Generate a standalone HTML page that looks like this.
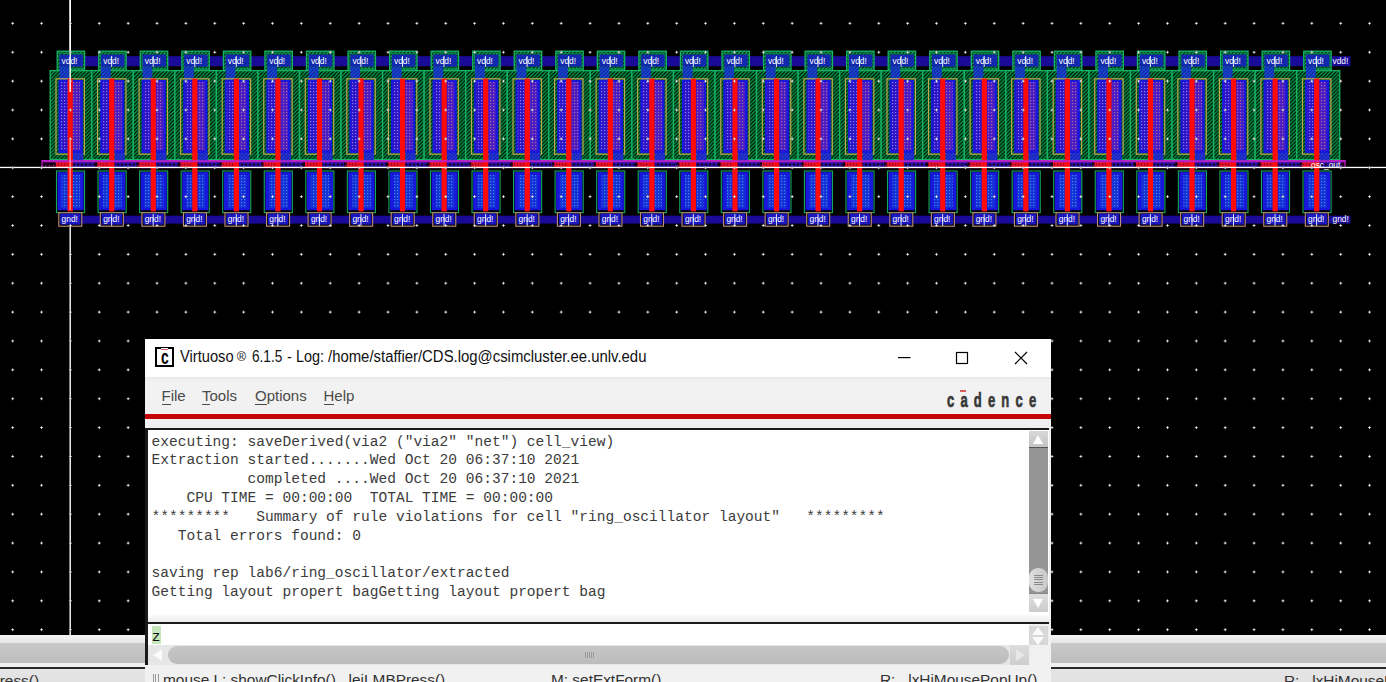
<!DOCTYPE html><html><head><meta charset='utf-8'><title>Virtuoso</title><style>
html,body{margin:0;padding:0;background:#f0f0f0;}
body{width:1386px;height:682px;overflow:hidden;position:relative;font-family:"Liberation Sans",sans-serif;}
#cv{position:absolute;left:0;top:0;display:block;}
.abs{position:absolute;}
#mainbot{left:0;top:635px;width:1386px;height:47px;background:linear-gradient(#ececec,#e2e2e2);}
#mainbot .s1{position:absolute;left:0;top:0;width:100%;height:8px;background:linear-gradient(#f4f4f4,#e6e6e6);}
#mainbot .s2{position:absolute;left:0;top:8px;width:100%;height:19.6px;background:linear-gradient(#cacaca,#c2c2c2 50%,#bebebe);}
#mainbot .s3{position:absolute;left:0;top:27.6px;width:100%;height:4.4px;background:#f0f0f0;}
#mainbot .s4{position:absolute;left:0;top:32px;width:100%;height:2px;background:#2a2a2a;}
#mainbot .t{position:absolute;top:37px;font-size:15.4px;color:#333;white-space:nowrap;line-height:18px;}
#win{left:145px;top:339px;width:906px;height:343px;background:#f0f0f0;overflow:hidden;}
#title{position:absolute;left:0;top:0;width:906px;height:38px;background:#fff;}
#title .tt{position:absolute;top:7.9px;font-size:15.8px;line-height:20px;color:#111;white-space:nowrap;transform-origin:0 0;}
#icon{position:absolute;left:10.2px;top:8.2px;width:15.2px;height:15.5px;border:2px solid #000;background:#fff;}
#icon b{position:absolute;left:3.6px;top:-3.3px;font-size:21px;line-height:22px;font-weight:bold;color:#000;transform-origin:0 0;transform:scaleX(.66);}
#icon i{position:absolute;left:4.2px;top:-0.4px;width:7px;height:1.6px;background:#d06070;box-shadow:0 -1px 0 #fff,0 1px 0 #fff,-1px 0 0 #fff,1px 0 0 #fff;}
#menubar{position:absolute;left:0;top:38px;width:906px;height:37px;background:linear-gradient(#e9e9e9,#f2f2f2 12%,#f1f1f1);}
#menubar span{position:absolute;top:9.5px;font-size:15px;line-height:18px;color:#4a4a4a;}
#menubar span u{text-decoration:none;border-bottom:1.4px solid #4a4a4a;}
#redline{position:absolute;left:0;top:75.3px;width:906px;height:5.2px;background:#c40404;}
#logo{position:absolute;left:801.8px;top:46.5px;font-family:"Liberation Sans",sans-serif;font-weight:bold;font-size:21px;line-height:28px;letter-spacing:9.95px;color:#383838;-webkit-text-stroke:0.7px #383838;white-space:nowrap;transform-origin:0 0;transform:scaleX(0.62);}
#logobar{position:absolute;left:815.2px;top:50.6px;width:6.2px;height:2px;background:#d86060;}
#ta{position:absolute;left:0;top:88.5px;width:904px;height:187px;background:#fff;border-left:2.5px solid #1a1a1a;border-top:2px solid #1a1a1a;box-sizing:border-box;}
#ta pre{margin:0;position:absolute;left:4.5px;top:3px;font-family:"Liberation Mono",monospace;font-size:14.55px;line-height:18.85px;color:#3c3c3c;white-space:pre;}
#vsb{position:absolute;left:883.5px;top:92px;width:19.5px;height:180.5px;background:#959595;}
#vsb .up{position:absolute;left:0;top:0;width:100%;height:17px;background:linear-gradient(#d8d8d8,#c4c4c4);border-bottom:1.5px solid #555;box-sizing:border-box;}
#vsb .dn{position:absolute;left:0;bottom:0;width:100%;height:19px;background:linear-gradient(#dedede,#cccccc);border-top:1px solid #888;box-sizing:border-box;}
#vsb .th{position:absolute;left:0;top:137px;width:100%;height:24px;border-radius:9px;background:linear-gradient(90deg,#e0e0e0,#c8c8c8);}
#vsb .th i{position:absolute;left:5.5px;top:7px;width:8.5px;height:10px;background:repeating-linear-gradient(#8a8a8a 0 1px,transparent 1px 2.2px);}
.tri-up{position:absolute;left:4px;top:4px;width:0;height:0;border-left:5.7px solid transparent;border-right:5.7px solid transparent;border-bottom:9px solid #fff;}
.tri-dn{position:absolute;left:4px;top:5px;width:0;height:0;border-left:5.7px solid transparent;border-right:5.7px solid transparent;border-top:9px solid #fff;}
#gap{position:absolute;left:0;top:276px;width:906px;height:7px;background:linear-gradient(#fafafa,#ebebeb);}
#inp{position:absolute;left:0;top:283px;width:884px;height:43px;background:#fff;border-left:2.5px solid #1a1a1a;border-top:2.2px solid #1a1a1a;box-sizing:border-box;}
#inp .z{position:absolute;left:4.6px;top:1.6px;width:9px;height:18.5px;background:#c6e6bc;}
#inp .z span{position:absolute;left:0.2px;top:2.5px;font-family:"Liberation Mono",monospace;font-size:14.55px;line-height:18px;color:#111;}
#inpline{position:absolute;left:0;top:283px;width:904px;height:2.2px;background:#1a1a1a;}
#lb{position:absolute;left:0;top:88.5px;width:2.5px;height:237.5px;background:#1a1a1a;}
#hsb{position:absolute;left:2.5px;top:306px;width:881px;height:20px;background:#e6e6e6;}
#hsb .th{position:absolute;left:20px;top:1px;width:841px;height:18px;border-radius:9px;background:linear-gradient(#c6c6c6,#bcbcbc);}
#hsb .grip{position:absolute;left:437px;top:7px;width:9px;height:6px;background:repeating-linear-gradient(90deg,#999 0 1px,transparent 1px 2px);}
#hsb .l{position:absolute;left:5px;top:4px;width:0;height:0;border-top:6px solid transparent;border-bottom:6px solid transparent;border-right:9px solid #fbfbfb;}
#hsb .r{position:absolute;left:862px;top:0;width:19px;height:20px;background:linear-gradient(#dcdcdc,#cecece);}
#hsb .r i{position:absolute;left:6px;top:4px;width:0;height:0;border-top:6px solid transparent;border-bottom:6px solid transparent;border-left:9px solid #e8e8e8;}
#spin{position:absolute;left:884px;top:287px;width:19px;height:19px;background:#d8d8d8;}
#spin .a{position:absolute;left:3px;top:1px;width:0;height:0;border-left:6.5px solid transparent;border-right:6.5px solid transparent;border-bottom:8px solid #fafafa;}
#spin .b{position:absolute;left:3px;top:10.5px;width:0;height:0;border-left:6.5px solid transparent;border-right:6.5px solid transparent;border-top:8px solid #fafafa;}
#status{position:absolute;left:0;top:326px;width:906px;height:17px;background:#f1f1f1;}
#status span{position:absolute;top:6.3px;font-size:15.4px;line-height:18px;color:#333;white-space:nowrap;}
#status .g{position:absolute;left:8px;top:9px;width:7px;height:9px;background:repeating-linear-gradient(90deg,#999 0 1px,transparent 1px 2.3px);}
.wb{position:absolute;}
</style></head><body><svg id='cv' width='1386' height='635' viewBox='0 0 1386 635'>
<defs>
<pattern id='hatch' width='3.7' height='3.7' patternUnits='userSpaceOnUse'>
 <rect width='3.7' height='3.7' fill='#000c04'/>
 <path d='M-1 4.7L4.7 -1M-1 1L1 -1M2.7 4.7L4.7 2.7' stroke='#06a44e' stroke-width='1.3'/>
</pattern>
<pattern id='bluehatch' width='3.7' height='3.7' patternUnits='userSpaceOnUse'>
 <rect width='3.7' height='3.7' fill='#1020b8'/>
 <path d='M-1 4.7L4.7 -1M-1 1L1 -1M2.7 4.7L4.7 2.7' stroke='#1a60c0' stroke-width='1.1'/>
</pattern>
<pattern id='taphatch' width='3.7' height='3.7' patternUnits='userSpaceOnUse'>
 <rect width='3.7' height='3.7' fill='#1418c0'/>
 <path d='M-1 4.7L4.7 -1M-1 1L1 -1M2.7 4.7L4.7 2.7' stroke='#103a9c' stroke-width='1.2'/>
</pattern>
<pattern id='bluehatch2' width='3.7' height='3.7' patternUnits='userSpaceOnUse'>
 <rect width='3.7' height='3.7' fill='#1818c8'/>
 <path d='M-1 4.7L4.7 -1M-1 1L1 -1M2.7 4.7L4.7 2.7' stroke='#2a50c0' stroke-width='1'/>
</pattern>
<pattern id='pdots' width='3' height='3' patternUnits='userSpaceOnUse'>
 <rect width='3' height='3' fill='#4a1cc4'/>
 <rect x='1' y='1' width='1.2' height='1.2' fill='#a868a8'/>
</pattern>
<pattern id='pdotsL' width='3' height='3' patternUnits='userSpaceOnUse'>
 <rect width='3' height='3' fill='#2c14c8'/>
 <rect x='1' y='1' width='1.2' height='1.2' fill='#8c7ce8'/>
</pattern>
<pattern id='ndots' width='3' height='3' patternUnits='userSpaceOnUse'>
 <rect width='3' height='3' fill='#1630d8'/>
 <rect x='1' y='1' width='1.2' height='1.2' fill='#3a8ae0'/>
</pattern>
<pattern id='banddots' width='4' height='5' patternUnits='userSpaceOnUse' patternTransform='translate(0 162)'>
 <rect width='4' height='5' fill='#2a10a0'/>
 <circle cx='2' cy='2.7' r='1.15' fill='#100828'/>
</pattern>
<pattern id='bandred' width='3' height='5' patternUnits='userSpaceOnUse' patternTransform='translate(0 162)'>
 <rect width='3' height='5' fill='#e8102c'/>
 <rect x='1' y='1.5' width='1.2' height='2' fill='#900818'/>
</pattern>
<pattern id='m2' width='4' height='4' patternUnits='userSpaceOnUse'>
 <rect width='4' height='4' fill='#180018'/>
 <rect x='1' y='1' width='1' height='1' fill='#a020a0'/>
</pattern>
</defs>
<rect width='1386' height='635' fill='#000'/><rect x='69.5' y='0' width='1.4' height='635' fill='#fff'/><rect x='59.00' y='56.20' width='1291.50' height='10.00' fill='#1a0a98'/><rect x='59.00' y='215.70' width='1291.50' height='7.90' fill='#1a0a98'/><rect x='42.00' y='160.60' width='1303.00' height='6.90' fill='url(#m2)' stroke='#c814c8' stroke-width='1.2'/><rect x='50.20' y='70.60' width='41.55' height='89.00' fill='url(#hatch)' stroke='#14b464' stroke-width='1.3'/><rect x='57.20' y='51.20' width='27.40' height='19.00' fill='url(#hatch)' stroke='#14b464' stroke-width='1.3'/><rect x='59.20' y='53.20' width='23.40' height='15.40' fill='none' stroke='#10a868' stroke-width='1' stroke-dasharray='2 1.5'/><rect x='59.50' y='54.60' width='23.40' height='12.00' fill='url(#taphatch)'/><rect x='59.50' y='66.60' width='9.70' height='15.40' fill='url(#bluehatch)'/><rect x='58.60' y='80.00' width='24.20' height='73.00' fill='#1818dc'/><rect x='60.50' y='82.00' width='7.20' height='68.50' fill='url(#pdotsL)'/><rect x='73.00' y='82.00' width='7.20' height='68.50' fill='url(#pdots)'/><rect x='56.00' y='78.80' width='28.40' height='75.40' fill='none' stroke='#c0a850' stroke-width='1.2'/><rect x='73.00' y='153.00' width='10.20' height='9.00' fill='url(#bluehatch2)'/><rect x='55.70' y='162.00' width='12.50' height='5.00' fill='url(#bandred)'/><rect x='72.70' y='162.00' width='22.10' height='5.00' fill='url(#banddots)'/><rect x='56.50' y='171.00' width='28.10' height='41.60' fill='#000' stroke='#14a85c' stroke-width='1.1'/><rect x='57.60' y='172.10' width='26.10' height='38.10' fill='#1818dc'/><rect x='61.50' y='175.00' width='6.20' height='33.00' fill='url(#ndots)'/><rect x='73.00' y='175.00' width='7.20' height='33.00' fill='url(#ndots)'/><rect x='58.80' y='212.80' width='23.00' height='13.40' fill='#000' stroke='#c09078' stroke-width='1.1'/><rect x='60.20' y='213.60' width='20.40' height='11.00' fill='#1a16c0'/><rect x='67.60' y='78.60' width='5.20' height='132.80' fill='#ff0a0a'/><rect x='91.75' y='70.60' width='41.55' height='89.00' fill='url(#hatch)' stroke='#14b464' stroke-width='1.3'/><rect x='98.75' y='51.20' width='27.40' height='19.00' fill='url(#hatch)' stroke='#14b464' stroke-width='1.3'/><rect x='100.75' y='53.20' width='23.40' height='15.40' fill='none' stroke='#10a868' stroke-width='1' stroke-dasharray='2 1.5'/><rect x='101.05' y='54.60' width='23.40' height='12.00' fill='url(#taphatch)'/><rect x='101.05' y='66.60' width='9.70' height='15.40' fill='url(#bluehatch)'/><rect x='100.15' y='80.00' width='24.20' height='73.00' fill='#1818dc'/><rect x='102.05' y='82.00' width='7.20' height='68.50' fill='url(#pdotsL)'/><rect x='114.55' y='82.00' width='7.20' height='68.50' fill='url(#pdots)'/><rect x='97.55' y='78.80' width='28.40' height='75.40' fill='none' stroke='#c0a850' stroke-width='1.2'/><rect x='114.55' y='153.00' width='10.20' height='9.00' fill='url(#bluehatch2)'/><rect x='97.25' y='162.00' width='12.50' height='5.00' fill='url(#bandred)'/><rect x='114.25' y='162.00' width='22.10' height='5.00' fill='url(#banddots)'/><rect x='98.05' y='171.00' width='28.10' height='41.60' fill='#000' stroke='#14a85c' stroke-width='1.1'/><rect x='99.15' y='172.10' width='26.10' height='38.10' fill='#1818dc'/><rect x='103.05' y='175.00' width='6.20' height='33.00' fill='url(#ndots)'/><rect x='114.55' y='175.00' width='7.20' height='33.00' fill='url(#ndots)'/><rect x='100.35' y='212.80' width='23.00' height='13.40' fill='#000' stroke='#c09078' stroke-width='1.1'/><rect x='101.75' y='213.60' width='20.40' height='11.00' fill='#1a16c0'/><rect x='109.15' y='78.60' width='5.20' height='132.80' fill='#ff0a0a'/><rect x='133.30' y='70.60' width='41.55' height='89.00' fill='url(#hatch)' stroke='#14b464' stroke-width='1.3'/><rect x='140.30' y='51.20' width='27.40' height='19.00' fill='url(#hatch)' stroke='#14b464' stroke-width='1.3'/><rect x='142.30' y='53.20' width='23.40' height='15.40' fill='none' stroke='#10a868' stroke-width='1' stroke-dasharray='2 1.5'/><rect x='142.60' y='54.60' width='23.40' height='12.00' fill='url(#taphatch)'/><rect x='142.60' y='66.60' width='9.70' height='15.40' fill='url(#bluehatch)'/><rect x='141.70' y='80.00' width='24.20' height='73.00' fill='#1818dc'/><rect x='143.60' y='82.00' width='7.20' height='68.50' fill='url(#pdotsL)'/><rect x='156.10' y='82.00' width='7.20' height='68.50' fill='url(#pdots)'/><rect x='139.10' y='78.80' width='28.40' height='75.40' fill='none' stroke='#c0a850' stroke-width='1.2'/><rect x='156.10' y='153.00' width='10.20' height='9.00' fill='url(#bluehatch2)'/><rect x='138.80' y='162.00' width='12.50' height='5.00' fill='url(#bandred)'/><rect x='155.80' y='162.00' width='22.10' height='5.00' fill='url(#banddots)'/><rect x='139.60' y='171.00' width='28.10' height='41.60' fill='#000' stroke='#14a85c' stroke-width='1.1'/><rect x='140.70' y='172.10' width='26.10' height='38.10' fill='#1818dc'/><rect x='144.60' y='175.00' width='6.20' height='33.00' fill='url(#ndots)'/><rect x='156.10' y='175.00' width='7.20' height='33.00' fill='url(#ndots)'/><rect x='141.90' y='212.80' width='23.00' height='13.40' fill='#000' stroke='#c09078' stroke-width='1.1'/><rect x='143.30' y='213.60' width='20.40' height='11.00' fill='#1a16c0'/><rect x='150.70' y='78.60' width='5.20' height='132.80' fill='#ff0a0a'/><rect x='174.85' y='70.60' width='41.55' height='89.00' fill='url(#hatch)' stroke='#14b464' stroke-width='1.3'/><rect x='181.85' y='51.20' width='27.40' height='19.00' fill='url(#hatch)' stroke='#14b464' stroke-width='1.3'/><rect x='183.85' y='53.20' width='23.40' height='15.40' fill='none' stroke='#10a868' stroke-width='1' stroke-dasharray='2 1.5'/><rect x='184.15' y='54.60' width='23.40' height='12.00' fill='url(#taphatch)'/><rect x='184.15' y='66.60' width='9.70' height='15.40' fill='url(#bluehatch)'/><rect x='183.25' y='80.00' width='24.20' height='73.00' fill='#1818dc'/><rect x='185.15' y='82.00' width='7.20' height='68.50' fill='url(#pdotsL)'/><rect x='197.65' y='82.00' width='7.20' height='68.50' fill='url(#pdots)'/><rect x='180.65' y='78.80' width='28.40' height='75.40' fill='none' stroke='#c0a850' stroke-width='1.2'/><rect x='197.65' y='153.00' width='10.20' height='9.00' fill='url(#bluehatch2)'/><rect x='180.35' y='162.00' width='12.50' height='5.00' fill='url(#bandred)'/><rect x='197.35' y='162.00' width='22.10' height='5.00' fill='url(#banddots)'/><rect x='181.15' y='171.00' width='28.10' height='41.60' fill='#000' stroke='#14a85c' stroke-width='1.1'/><rect x='182.25' y='172.10' width='26.10' height='38.10' fill='#1818dc'/><rect x='186.15' y='175.00' width='6.20' height='33.00' fill='url(#ndots)'/><rect x='197.65' y='175.00' width='7.20' height='33.00' fill='url(#ndots)'/><rect x='183.45' y='212.80' width='23.00' height='13.40' fill='#000' stroke='#c09078' stroke-width='1.1'/><rect x='184.85' y='213.60' width='20.40' height='11.00' fill='#1a16c0'/><rect x='192.25' y='78.60' width='5.20' height='132.80' fill='#ff0a0a'/><rect x='216.40' y='70.60' width='41.55' height='89.00' fill='url(#hatch)' stroke='#14b464' stroke-width='1.3'/><rect x='223.40' y='51.20' width='27.40' height='19.00' fill='url(#hatch)' stroke='#14b464' stroke-width='1.3'/><rect x='225.40' y='53.20' width='23.40' height='15.40' fill='none' stroke='#10a868' stroke-width='1' stroke-dasharray='2 1.5'/><rect x='225.70' y='54.60' width='23.40' height='12.00' fill='url(#taphatch)'/><rect x='225.70' y='66.60' width='9.70' height='15.40' fill='url(#bluehatch)'/><rect x='224.80' y='80.00' width='24.20' height='73.00' fill='#1818dc'/><rect x='226.70' y='82.00' width='7.20' height='68.50' fill='url(#pdotsL)'/><rect x='239.20' y='82.00' width='7.20' height='68.50' fill='url(#pdots)'/><rect x='222.20' y='78.80' width='28.40' height='75.40' fill='none' stroke='#c0a850' stroke-width='1.2'/><rect x='239.20' y='153.00' width='10.20' height='9.00' fill='url(#bluehatch2)'/><rect x='221.90' y='162.00' width='12.50' height='5.00' fill='url(#bandred)'/><rect x='238.90' y='162.00' width='22.10' height='5.00' fill='url(#banddots)'/><rect x='222.70' y='171.00' width='28.10' height='41.60' fill='#000' stroke='#14a85c' stroke-width='1.1'/><rect x='223.80' y='172.10' width='26.10' height='38.10' fill='#1818dc'/><rect x='227.70' y='175.00' width='6.20' height='33.00' fill='url(#ndots)'/><rect x='239.20' y='175.00' width='7.20' height='33.00' fill='url(#ndots)'/><rect x='225.00' y='212.80' width='23.00' height='13.40' fill='#000' stroke='#c09078' stroke-width='1.1'/><rect x='226.40' y='213.60' width='20.40' height='11.00' fill='#1a16c0'/><rect x='233.80' y='78.60' width='5.20' height='132.80' fill='#ff0a0a'/><rect x='257.95' y='70.60' width='41.55' height='89.00' fill='url(#hatch)' stroke='#14b464' stroke-width='1.3'/><rect x='264.95' y='51.20' width='27.40' height='19.00' fill='url(#hatch)' stroke='#14b464' stroke-width='1.3'/><rect x='266.95' y='53.20' width='23.40' height='15.40' fill='none' stroke='#10a868' stroke-width='1' stroke-dasharray='2 1.5'/><rect x='267.25' y='54.60' width='23.40' height='12.00' fill='url(#taphatch)'/><rect x='267.25' y='66.60' width='9.70' height='15.40' fill='url(#bluehatch)'/><rect x='266.35' y='80.00' width='24.20' height='73.00' fill='#1818dc'/><rect x='268.25' y='82.00' width='7.20' height='68.50' fill='url(#pdotsL)'/><rect x='280.75' y='82.00' width='7.20' height='68.50' fill='url(#pdots)'/><rect x='263.75' y='78.80' width='28.40' height='75.40' fill='none' stroke='#c0a850' stroke-width='1.2'/><rect x='280.75' y='153.00' width='10.20' height='9.00' fill='url(#bluehatch2)'/><rect x='263.45' y='162.00' width='12.50' height='5.00' fill='url(#bandred)'/><rect x='280.45' y='162.00' width='22.10' height='5.00' fill='url(#banddots)'/><rect x='264.25' y='171.00' width='28.10' height='41.60' fill='#000' stroke='#14a85c' stroke-width='1.1'/><rect x='265.35' y='172.10' width='26.10' height='38.10' fill='#1818dc'/><rect x='269.25' y='175.00' width='6.20' height='33.00' fill='url(#ndots)'/><rect x='280.75' y='175.00' width='7.20' height='33.00' fill='url(#ndots)'/><rect x='266.55' y='212.80' width='23.00' height='13.40' fill='#000' stroke='#c09078' stroke-width='1.1'/><rect x='267.95' y='213.60' width='20.40' height='11.00' fill='#1a16c0'/><rect x='275.35' y='78.60' width='5.20' height='132.80' fill='#ff0a0a'/><rect x='299.50' y='70.60' width='41.55' height='89.00' fill='url(#hatch)' stroke='#14b464' stroke-width='1.3'/><rect x='306.50' y='51.20' width='27.40' height='19.00' fill='url(#hatch)' stroke='#14b464' stroke-width='1.3'/><rect x='308.50' y='53.20' width='23.40' height='15.40' fill='none' stroke='#10a868' stroke-width='1' stroke-dasharray='2 1.5'/><rect x='308.80' y='54.60' width='23.40' height='12.00' fill='url(#taphatch)'/><rect x='308.80' y='66.60' width='9.70' height='15.40' fill='url(#bluehatch)'/><rect x='307.90' y='80.00' width='24.20' height='73.00' fill='#1818dc'/><rect x='309.80' y='82.00' width='7.20' height='68.50' fill='url(#pdotsL)'/><rect x='322.30' y='82.00' width='7.20' height='68.50' fill='url(#pdots)'/><rect x='305.30' y='78.80' width='28.40' height='75.40' fill='none' stroke='#c0a850' stroke-width='1.2'/><rect x='322.30' y='153.00' width='10.20' height='9.00' fill='url(#bluehatch2)'/><rect x='305.00' y='162.00' width='12.50' height='5.00' fill='url(#bandred)'/><rect x='322.00' y='162.00' width='22.10' height='5.00' fill='url(#banddots)'/><rect x='305.80' y='171.00' width='28.10' height='41.60' fill='#000' stroke='#14a85c' stroke-width='1.1'/><rect x='306.90' y='172.10' width='26.10' height='38.10' fill='#1818dc'/><rect x='310.80' y='175.00' width='6.20' height='33.00' fill='url(#ndots)'/><rect x='322.30' y='175.00' width='7.20' height='33.00' fill='url(#ndots)'/><rect x='308.10' y='212.80' width='23.00' height='13.40' fill='#000' stroke='#c09078' stroke-width='1.1'/><rect x='309.50' y='213.60' width='20.40' height='11.00' fill='#1a16c0'/><rect x='316.90' y='78.60' width='5.20' height='132.80' fill='#ff0a0a'/><rect x='341.05' y='70.60' width='41.55' height='89.00' fill='url(#hatch)' stroke='#14b464' stroke-width='1.3'/><rect x='348.05' y='51.20' width='27.40' height='19.00' fill='url(#hatch)' stroke='#14b464' stroke-width='1.3'/><rect x='350.05' y='53.20' width='23.40' height='15.40' fill='none' stroke='#10a868' stroke-width='1' stroke-dasharray='2 1.5'/><rect x='350.35' y='54.60' width='23.40' height='12.00' fill='url(#taphatch)'/><rect x='350.35' y='66.60' width='9.70' height='15.40' fill='url(#bluehatch)'/><rect x='349.45' y='80.00' width='24.20' height='73.00' fill='#1818dc'/><rect x='351.35' y='82.00' width='7.20' height='68.50' fill='url(#pdotsL)'/><rect x='363.85' y='82.00' width='7.20' height='68.50' fill='url(#pdots)'/><rect x='346.85' y='78.80' width='28.40' height='75.40' fill='none' stroke='#c0a850' stroke-width='1.2'/><rect x='363.85' y='153.00' width='10.20' height='9.00' fill='url(#bluehatch2)'/><rect x='346.55' y='162.00' width='12.50' height='5.00' fill='url(#bandred)'/><rect x='363.55' y='162.00' width='22.10' height='5.00' fill='url(#banddots)'/><rect x='347.35' y='171.00' width='28.10' height='41.60' fill='#000' stroke='#14a85c' stroke-width='1.1'/><rect x='348.45' y='172.10' width='26.10' height='38.10' fill='#1818dc'/><rect x='352.35' y='175.00' width='6.20' height='33.00' fill='url(#ndots)'/><rect x='363.85' y='175.00' width='7.20' height='33.00' fill='url(#ndots)'/><rect x='349.65' y='212.80' width='23.00' height='13.40' fill='#000' stroke='#c09078' stroke-width='1.1'/><rect x='351.05' y='213.60' width='20.40' height='11.00' fill='#1a16c0'/><rect x='358.45' y='78.60' width='5.20' height='132.80' fill='#ff0a0a'/><rect x='382.60' y='70.60' width='41.55' height='89.00' fill='url(#hatch)' stroke='#14b464' stroke-width='1.3'/><rect x='389.60' y='51.20' width='27.40' height='19.00' fill='url(#hatch)' stroke='#14b464' stroke-width='1.3'/><rect x='391.60' y='53.20' width='23.40' height='15.40' fill='none' stroke='#10a868' stroke-width='1' stroke-dasharray='2 1.5'/><rect x='391.90' y='54.60' width='23.40' height='12.00' fill='url(#taphatch)'/><rect x='391.90' y='66.60' width='9.70' height='15.40' fill='url(#bluehatch)'/><rect x='391.00' y='80.00' width='24.20' height='73.00' fill='#1818dc'/><rect x='392.90' y='82.00' width='7.20' height='68.50' fill='url(#pdotsL)'/><rect x='405.40' y='82.00' width='7.20' height='68.50' fill='url(#pdots)'/><rect x='388.40' y='78.80' width='28.40' height='75.40' fill='none' stroke='#c0a850' stroke-width='1.2'/><rect x='405.40' y='153.00' width='10.20' height='9.00' fill='url(#bluehatch2)'/><rect x='388.10' y='162.00' width='12.50' height='5.00' fill='url(#bandred)'/><rect x='405.10' y='162.00' width='22.10' height='5.00' fill='url(#banddots)'/><rect x='388.90' y='171.00' width='28.10' height='41.60' fill='#000' stroke='#14a85c' stroke-width='1.1'/><rect x='390.00' y='172.10' width='26.10' height='38.10' fill='#1818dc'/><rect x='393.90' y='175.00' width='6.20' height='33.00' fill='url(#ndots)'/><rect x='405.40' y='175.00' width='7.20' height='33.00' fill='url(#ndots)'/><rect x='391.20' y='212.80' width='23.00' height='13.40' fill='#000' stroke='#c09078' stroke-width='1.1'/><rect x='392.60' y='213.60' width='20.40' height='11.00' fill='#1a16c0'/><rect x='400.00' y='78.60' width='5.20' height='132.80' fill='#ff0a0a'/><rect x='424.15' y='70.60' width='41.55' height='89.00' fill='url(#hatch)' stroke='#14b464' stroke-width='1.3'/><rect x='431.15' y='51.20' width='27.40' height='19.00' fill='url(#hatch)' stroke='#14b464' stroke-width='1.3'/><rect x='433.15' y='53.20' width='23.40' height='15.40' fill='none' stroke='#10a868' stroke-width='1' stroke-dasharray='2 1.5'/><rect x='433.45' y='54.60' width='23.40' height='12.00' fill='url(#taphatch)'/><rect x='433.45' y='66.60' width='9.70' height='15.40' fill='url(#bluehatch)'/><rect x='432.55' y='80.00' width='24.20' height='73.00' fill='#1818dc'/><rect x='434.45' y='82.00' width='7.20' height='68.50' fill='url(#pdotsL)'/><rect x='446.95' y='82.00' width='7.20' height='68.50' fill='url(#pdots)'/><rect x='429.95' y='78.80' width='28.40' height='75.40' fill='none' stroke='#c0a850' stroke-width='1.2'/><rect x='446.95' y='153.00' width='10.20' height='9.00' fill='url(#bluehatch2)'/><rect x='429.65' y='162.00' width='12.50' height='5.00' fill='url(#bandred)'/><rect x='446.65' y='162.00' width='22.10' height='5.00' fill='url(#banddots)'/><rect x='430.45' y='171.00' width='28.10' height='41.60' fill='#000' stroke='#14a85c' stroke-width='1.1'/><rect x='431.55' y='172.10' width='26.10' height='38.10' fill='#1818dc'/><rect x='435.45' y='175.00' width='6.20' height='33.00' fill='url(#ndots)'/><rect x='446.95' y='175.00' width='7.20' height='33.00' fill='url(#ndots)'/><rect x='432.75' y='212.80' width='23.00' height='13.40' fill='#000' stroke='#c09078' stroke-width='1.1'/><rect x='434.15' y='213.60' width='20.40' height='11.00' fill='#1a16c0'/><rect x='441.55' y='78.60' width='5.20' height='132.80' fill='#ff0a0a'/><rect x='465.70' y='70.60' width='41.55' height='89.00' fill='url(#hatch)' stroke='#14b464' stroke-width='1.3'/><rect x='472.70' y='51.20' width='27.40' height='19.00' fill='url(#hatch)' stroke='#14b464' stroke-width='1.3'/><rect x='474.70' y='53.20' width='23.40' height='15.40' fill='none' stroke='#10a868' stroke-width='1' stroke-dasharray='2 1.5'/><rect x='475.00' y='54.60' width='23.40' height='12.00' fill='url(#taphatch)'/><rect x='475.00' y='66.60' width='9.70' height='15.40' fill='url(#bluehatch)'/><rect x='474.10' y='80.00' width='24.20' height='73.00' fill='#1818dc'/><rect x='476.00' y='82.00' width='7.20' height='68.50' fill='url(#pdotsL)'/><rect x='488.50' y='82.00' width='7.20' height='68.50' fill='url(#pdots)'/><rect x='471.50' y='78.80' width='28.40' height='75.40' fill='none' stroke='#c0a850' stroke-width='1.2'/><rect x='488.50' y='153.00' width='10.20' height='9.00' fill='url(#bluehatch2)'/><rect x='471.20' y='162.00' width='12.50' height='5.00' fill='url(#bandred)'/><rect x='488.20' y='162.00' width='22.10' height='5.00' fill='url(#banddots)'/><rect x='472.00' y='171.00' width='28.10' height='41.60' fill='#000' stroke='#14a85c' stroke-width='1.1'/><rect x='473.10' y='172.10' width='26.10' height='38.10' fill='#1818dc'/><rect x='477.00' y='175.00' width='6.20' height='33.00' fill='url(#ndots)'/><rect x='488.50' y='175.00' width='7.20' height='33.00' fill='url(#ndots)'/><rect x='474.30' y='212.80' width='23.00' height='13.40' fill='#000' stroke='#c09078' stroke-width='1.1'/><rect x='475.70' y='213.60' width='20.40' height='11.00' fill='#1a16c0'/><rect x='483.10' y='78.60' width='5.20' height='132.80' fill='#ff0a0a'/><rect x='507.25' y='70.60' width='41.55' height='89.00' fill='url(#hatch)' stroke='#14b464' stroke-width='1.3'/><rect x='514.25' y='51.20' width='27.40' height='19.00' fill='url(#hatch)' stroke='#14b464' stroke-width='1.3'/><rect x='516.25' y='53.20' width='23.40' height='15.40' fill='none' stroke='#10a868' stroke-width='1' stroke-dasharray='2 1.5'/><rect x='516.55' y='54.60' width='23.40' height='12.00' fill='url(#taphatch)'/><rect x='516.55' y='66.60' width='9.70' height='15.40' fill='url(#bluehatch)'/><rect x='515.65' y='80.00' width='24.20' height='73.00' fill='#1818dc'/><rect x='517.55' y='82.00' width='7.20' height='68.50' fill='url(#pdotsL)'/><rect x='530.05' y='82.00' width='7.20' height='68.50' fill='url(#pdots)'/><rect x='513.05' y='78.80' width='28.40' height='75.40' fill='none' stroke='#c0a850' stroke-width='1.2'/><rect x='530.05' y='153.00' width='10.20' height='9.00' fill='url(#bluehatch2)'/><rect x='512.75' y='162.00' width='12.50' height='5.00' fill='url(#bandred)'/><rect x='529.75' y='162.00' width='22.10' height='5.00' fill='url(#banddots)'/><rect x='513.55' y='171.00' width='28.10' height='41.60' fill='#000' stroke='#14a85c' stroke-width='1.1'/><rect x='514.65' y='172.10' width='26.10' height='38.10' fill='#1818dc'/><rect x='518.55' y='175.00' width='6.20' height='33.00' fill='url(#ndots)'/><rect x='530.05' y='175.00' width='7.20' height='33.00' fill='url(#ndots)'/><rect x='515.85' y='212.80' width='23.00' height='13.40' fill='#000' stroke='#c09078' stroke-width='1.1'/><rect x='517.25' y='213.60' width='20.40' height='11.00' fill='#1a16c0'/><rect x='524.65' y='78.60' width='5.20' height='132.80' fill='#ff0a0a'/><rect x='548.80' y='70.60' width='41.55' height='89.00' fill='url(#hatch)' stroke='#14b464' stroke-width='1.3'/><rect x='555.80' y='51.20' width='27.40' height='19.00' fill='url(#hatch)' stroke='#14b464' stroke-width='1.3'/><rect x='557.80' y='53.20' width='23.40' height='15.40' fill='none' stroke='#10a868' stroke-width='1' stroke-dasharray='2 1.5'/><rect x='558.10' y='54.60' width='23.40' height='12.00' fill='url(#taphatch)'/><rect x='558.10' y='66.60' width='9.70' height='15.40' fill='url(#bluehatch)'/><rect x='557.20' y='80.00' width='24.20' height='73.00' fill='#1818dc'/><rect x='559.10' y='82.00' width='7.20' height='68.50' fill='url(#pdotsL)'/><rect x='571.60' y='82.00' width='7.20' height='68.50' fill='url(#pdots)'/><rect x='554.60' y='78.80' width='28.40' height='75.40' fill='none' stroke='#c0a850' stroke-width='1.2'/><rect x='571.60' y='153.00' width='10.20' height='9.00' fill='url(#bluehatch2)'/><rect x='554.30' y='162.00' width='12.50' height='5.00' fill='url(#bandred)'/><rect x='571.30' y='162.00' width='22.10' height='5.00' fill='url(#banddots)'/><rect x='555.10' y='171.00' width='28.10' height='41.60' fill='#000' stroke='#14a85c' stroke-width='1.1'/><rect x='556.20' y='172.10' width='26.10' height='38.10' fill='#1818dc'/><rect x='560.10' y='175.00' width='6.20' height='33.00' fill='url(#ndots)'/><rect x='571.60' y='175.00' width='7.20' height='33.00' fill='url(#ndots)'/><rect x='557.40' y='212.80' width='23.00' height='13.40' fill='#000' stroke='#c09078' stroke-width='1.1'/><rect x='558.80' y='213.60' width='20.40' height='11.00' fill='#1a16c0'/><rect x='566.20' y='78.60' width='5.20' height='132.80' fill='#ff0a0a'/><rect x='590.35' y='70.60' width='41.55' height='89.00' fill='url(#hatch)' stroke='#14b464' stroke-width='1.3'/><rect x='597.35' y='51.20' width='27.40' height='19.00' fill='url(#hatch)' stroke='#14b464' stroke-width='1.3'/><rect x='599.35' y='53.20' width='23.40' height='15.40' fill='none' stroke='#10a868' stroke-width='1' stroke-dasharray='2 1.5'/><rect x='599.65' y='54.60' width='23.40' height='12.00' fill='url(#taphatch)'/><rect x='599.65' y='66.60' width='9.70' height='15.40' fill='url(#bluehatch)'/><rect x='598.75' y='80.00' width='24.20' height='73.00' fill='#1818dc'/><rect x='600.65' y='82.00' width='7.20' height='68.50' fill='url(#pdotsL)'/><rect x='613.15' y='82.00' width='7.20' height='68.50' fill='url(#pdots)'/><rect x='596.15' y='78.80' width='28.40' height='75.40' fill='none' stroke='#c0a850' stroke-width='1.2'/><rect x='613.15' y='153.00' width='10.20' height='9.00' fill='url(#bluehatch2)'/><rect x='595.85' y='162.00' width='12.50' height='5.00' fill='url(#bandred)'/><rect x='612.85' y='162.00' width='22.10' height='5.00' fill='url(#banddots)'/><rect x='596.65' y='171.00' width='28.10' height='41.60' fill='#000' stroke='#14a85c' stroke-width='1.1'/><rect x='597.75' y='172.10' width='26.10' height='38.10' fill='#1818dc'/><rect x='601.65' y='175.00' width='6.20' height='33.00' fill='url(#ndots)'/><rect x='613.15' y='175.00' width='7.20' height='33.00' fill='url(#ndots)'/><rect x='598.95' y='212.80' width='23.00' height='13.40' fill='#000' stroke='#c09078' stroke-width='1.1'/><rect x='600.35' y='213.60' width='20.40' height='11.00' fill='#1a16c0'/><rect x='607.75' y='78.60' width='5.20' height='132.80' fill='#ff0a0a'/><rect x='631.90' y='70.60' width='41.55' height='89.00' fill='url(#hatch)' stroke='#14b464' stroke-width='1.3'/><rect x='638.90' y='51.20' width='27.40' height='19.00' fill='url(#hatch)' stroke='#14b464' stroke-width='1.3'/><rect x='640.90' y='53.20' width='23.40' height='15.40' fill='none' stroke='#10a868' stroke-width='1' stroke-dasharray='2 1.5'/><rect x='641.20' y='54.60' width='23.40' height='12.00' fill='url(#taphatch)'/><rect x='641.20' y='66.60' width='9.70' height='15.40' fill='url(#bluehatch)'/><rect x='640.30' y='80.00' width='24.20' height='73.00' fill='#1818dc'/><rect x='642.20' y='82.00' width='7.20' height='68.50' fill='url(#pdotsL)'/><rect x='654.70' y='82.00' width='7.20' height='68.50' fill='url(#pdots)'/><rect x='637.70' y='78.80' width='28.40' height='75.40' fill='none' stroke='#c0a850' stroke-width='1.2'/><rect x='654.70' y='153.00' width='10.20' height='9.00' fill='url(#bluehatch2)'/><rect x='637.40' y='162.00' width='12.50' height='5.00' fill='url(#bandred)'/><rect x='654.40' y='162.00' width='22.10' height='5.00' fill='url(#banddots)'/><rect x='638.20' y='171.00' width='28.10' height='41.60' fill='#000' stroke='#14a85c' stroke-width='1.1'/><rect x='639.30' y='172.10' width='26.10' height='38.10' fill='#1818dc'/><rect x='643.20' y='175.00' width='6.20' height='33.00' fill='url(#ndots)'/><rect x='654.70' y='175.00' width='7.20' height='33.00' fill='url(#ndots)'/><rect x='640.50' y='212.80' width='23.00' height='13.40' fill='#000' stroke='#c09078' stroke-width='1.1'/><rect x='641.90' y='213.60' width='20.40' height='11.00' fill='#1a16c0'/><rect x='649.30' y='78.60' width='5.20' height='132.80' fill='#ff0a0a'/><rect x='673.45' y='70.60' width='41.55' height='89.00' fill='url(#hatch)' stroke='#14b464' stroke-width='1.3'/><rect x='680.45' y='51.20' width='27.40' height='19.00' fill='url(#hatch)' stroke='#14b464' stroke-width='1.3'/><rect x='682.45' y='53.20' width='23.40' height='15.40' fill='none' stroke='#10a868' stroke-width='1' stroke-dasharray='2 1.5'/><rect x='682.75' y='54.60' width='23.40' height='12.00' fill='url(#taphatch)'/><rect x='682.75' y='66.60' width='9.70' height='15.40' fill='url(#bluehatch)'/><rect x='681.85' y='80.00' width='24.20' height='73.00' fill='#1818dc'/><rect x='683.75' y='82.00' width='7.20' height='68.50' fill='url(#pdotsL)'/><rect x='696.25' y='82.00' width='7.20' height='68.50' fill='url(#pdots)'/><rect x='679.25' y='78.80' width='28.40' height='75.40' fill='none' stroke='#c0a850' stroke-width='1.2'/><rect x='696.25' y='153.00' width='10.20' height='9.00' fill='url(#bluehatch2)'/><rect x='678.95' y='162.00' width='12.50' height='5.00' fill='url(#bandred)'/><rect x='695.95' y='162.00' width='22.10' height='5.00' fill='url(#banddots)'/><rect x='679.75' y='171.00' width='28.10' height='41.60' fill='#000' stroke='#14a85c' stroke-width='1.1'/><rect x='680.85' y='172.10' width='26.10' height='38.10' fill='#1818dc'/><rect x='684.75' y='175.00' width='6.20' height='33.00' fill='url(#ndots)'/><rect x='696.25' y='175.00' width='7.20' height='33.00' fill='url(#ndots)'/><rect x='682.05' y='212.80' width='23.00' height='13.40' fill='#000' stroke='#c09078' stroke-width='1.1'/><rect x='683.45' y='213.60' width='20.40' height='11.00' fill='#1a16c0'/><rect x='690.85' y='78.60' width='5.20' height='132.80' fill='#ff0a0a'/><rect x='715.00' y='70.60' width='41.55' height='89.00' fill='url(#hatch)' stroke='#14b464' stroke-width='1.3'/><rect x='722.00' y='51.20' width='27.40' height='19.00' fill='url(#hatch)' stroke='#14b464' stroke-width='1.3'/><rect x='724.00' y='53.20' width='23.40' height='15.40' fill='none' stroke='#10a868' stroke-width='1' stroke-dasharray='2 1.5'/><rect x='724.30' y='54.60' width='23.40' height='12.00' fill='url(#taphatch)'/><rect x='724.30' y='66.60' width='9.70' height='15.40' fill='url(#bluehatch)'/><rect x='723.40' y='80.00' width='24.20' height='73.00' fill='#1818dc'/><rect x='725.30' y='82.00' width='7.20' height='68.50' fill='url(#pdotsL)'/><rect x='737.80' y='82.00' width='7.20' height='68.50' fill='url(#pdots)'/><rect x='720.80' y='78.80' width='28.40' height='75.40' fill='none' stroke='#c0a850' stroke-width='1.2'/><rect x='737.80' y='153.00' width='10.20' height='9.00' fill='url(#bluehatch2)'/><rect x='720.50' y='162.00' width='12.50' height='5.00' fill='url(#bandred)'/><rect x='737.50' y='162.00' width='22.10' height='5.00' fill='url(#banddots)'/><rect x='721.30' y='171.00' width='28.10' height='41.60' fill='#000' stroke='#14a85c' stroke-width='1.1'/><rect x='722.40' y='172.10' width='26.10' height='38.10' fill='#1818dc'/><rect x='726.30' y='175.00' width='6.20' height='33.00' fill='url(#ndots)'/><rect x='737.80' y='175.00' width='7.20' height='33.00' fill='url(#ndots)'/><rect x='723.60' y='212.80' width='23.00' height='13.40' fill='#000' stroke='#c09078' stroke-width='1.1'/><rect x='725.00' y='213.60' width='20.40' height='11.00' fill='#1a16c0'/><rect x='732.40' y='78.60' width='5.20' height='132.80' fill='#ff0a0a'/><rect x='756.55' y='70.60' width='41.55' height='89.00' fill='url(#hatch)' stroke='#14b464' stroke-width='1.3'/><rect x='763.55' y='51.20' width='27.40' height='19.00' fill='url(#hatch)' stroke='#14b464' stroke-width='1.3'/><rect x='765.55' y='53.20' width='23.40' height='15.40' fill='none' stroke='#10a868' stroke-width='1' stroke-dasharray='2 1.5'/><rect x='765.85' y='54.60' width='23.40' height='12.00' fill='url(#taphatch)'/><rect x='765.85' y='66.60' width='9.70' height='15.40' fill='url(#bluehatch)'/><rect x='764.95' y='80.00' width='24.20' height='73.00' fill='#1818dc'/><rect x='766.85' y='82.00' width='7.20' height='68.50' fill='url(#pdotsL)'/><rect x='779.35' y='82.00' width='7.20' height='68.50' fill='url(#pdots)'/><rect x='762.35' y='78.80' width='28.40' height='75.40' fill='none' stroke='#c0a850' stroke-width='1.2'/><rect x='779.35' y='153.00' width='10.20' height='9.00' fill='url(#bluehatch2)'/><rect x='762.05' y='162.00' width='12.50' height='5.00' fill='url(#bandred)'/><rect x='779.05' y='162.00' width='22.10' height='5.00' fill='url(#banddots)'/><rect x='762.85' y='171.00' width='28.10' height='41.60' fill='#000' stroke='#14a85c' stroke-width='1.1'/><rect x='763.95' y='172.10' width='26.10' height='38.10' fill='#1818dc'/><rect x='767.85' y='175.00' width='6.20' height='33.00' fill='url(#ndots)'/><rect x='779.35' y='175.00' width='7.20' height='33.00' fill='url(#ndots)'/><rect x='765.15' y='212.80' width='23.00' height='13.40' fill='#000' stroke='#c09078' stroke-width='1.1'/><rect x='766.55' y='213.60' width='20.40' height='11.00' fill='#1a16c0'/><rect x='773.95' y='78.60' width='5.20' height='132.80' fill='#ff0a0a'/><rect x='798.10' y='70.60' width='41.55' height='89.00' fill='url(#hatch)' stroke='#14b464' stroke-width='1.3'/><rect x='805.10' y='51.20' width='27.40' height='19.00' fill='url(#hatch)' stroke='#14b464' stroke-width='1.3'/><rect x='807.10' y='53.20' width='23.40' height='15.40' fill='none' stroke='#10a868' stroke-width='1' stroke-dasharray='2 1.5'/><rect x='807.40' y='54.60' width='23.40' height='12.00' fill='url(#taphatch)'/><rect x='807.40' y='66.60' width='9.70' height='15.40' fill='url(#bluehatch)'/><rect x='806.50' y='80.00' width='24.20' height='73.00' fill='#1818dc'/><rect x='808.40' y='82.00' width='7.20' height='68.50' fill='url(#pdotsL)'/><rect x='820.90' y='82.00' width='7.20' height='68.50' fill='url(#pdots)'/><rect x='803.90' y='78.80' width='28.40' height='75.40' fill='none' stroke='#c0a850' stroke-width='1.2'/><rect x='820.90' y='153.00' width='10.20' height='9.00' fill='url(#bluehatch2)'/><rect x='803.60' y='162.00' width='12.50' height='5.00' fill='url(#bandred)'/><rect x='820.60' y='162.00' width='22.10' height='5.00' fill='url(#banddots)'/><rect x='804.40' y='171.00' width='28.10' height='41.60' fill='#000' stroke='#14a85c' stroke-width='1.1'/><rect x='805.50' y='172.10' width='26.10' height='38.10' fill='#1818dc'/><rect x='809.40' y='175.00' width='6.20' height='33.00' fill='url(#ndots)'/><rect x='820.90' y='175.00' width='7.20' height='33.00' fill='url(#ndots)'/><rect x='806.70' y='212.80' width='23.00' height='13.40' fill='#000' stroke='#c09078' stroke-width='1.1'/><rect x='808.10' y='213.60' width='20.40' height='11.00' fill='#1a16c0'/><rect x='815.50' y='78.60' width='5.20' height='132.80' fill='#ff0a0a'/><rect x='839.65' y='70.60' width='41.55' height='89.00' fill='url(#hatch)' stroke='#14b464' stroke-width='1.3'/><rect x='846.65' y='51.20' width='27.40' height='19.00' fill='url(#hatch)' stroke='#14b464' stroke-width='1.3'/><rect x='848.65' y='53.20' width='23.40' height='15.40' fill='none' stroke='#10a868' stroke-width='1' stroke-dasharray='2 1.5'/><rect x='848.95' y='54.60' width='23.40' height='12.00' fill='url(#taphatch)'/><rect x='848.95' y='66.60' width='9.70' height='15.40' fill='url(#bluehatch)'/><rect x='848.05' y='80.00' width='24.20' height='73.00' fill='#1818dc'/><rect x='849.95' y='82.00' width='7.20' height='68.50' fill='url(#pdotsL)'/><rect x='862.45' y='82.00' width='7.20' height='68.50' fill='url(#pdots)'/><rect x='845.45' y='78.80' width='28.40' height='75.40' fill='none' stroke='#c0a850' stroke-width='1.2'/><rect x='862.45' y='153.00' width='10.20' height='9.00' fill='url(#bluehatch2)'/><rect x='845.15' y='162.00' width='12.50' height='5.00' fill='url(#bandred)'/><rect x='862.15' y='162.00' width='22.10' height='5.00' fill='url(#banddots)'/><rect x='845.95' y='171.00' width='28.10' height='41.60' fill='#000' stroke='#14a85c' stroke-width='1.1'/><rect x='847.05' y='172.10' width='26.10' height='38.10' fill='#1818dc'/><rect x='850.95' y='175.00' width='6.20' height='33.00' fill='url(#ndots)'/><rect x='862.45' y='175.00' width='7.20' height='33.00' fill='url(#ndots)'/><rect x='848.25' y='212.80' width='23.00' height='13.40' fill='#000' stroke='#c09078' stroke-width='1.1'/><rect x='849.65' y='213.60' width='20.40' height='11.00' fill='#1a16c0'/><rect x='857.05' y='78.60' width='5.20' height='132.80' fill='#ff0a0a'/><rect x='881.20' y='70.60' width='41.55' height='89.00' fill='url(#hatch)' stroke='#14b464' stroke-width='1.3'/><rect x='888.20' y='51.20' width='27.40' height='19.00' fill='url(#hatch)' stroke='#14b464' stroke-width='1.3'/><rect x='890.20' y='53.20' width='23.40' height='15.40' fill='none' stroke='#10a868' stroke-width='1' stroke-dasharray='2 1.5'/><rect x='890.50' y='54.60' width='23.40' height='12.00' fill='url(#taphatch)'/><rect x='890.50' y='66.60' width='9.70' height='15.40' fill='url(#bluehatch)'/><rect x='889.60' y='80.00' width='24.20' height='73.00' fill='#1818dc'/><rect x='891.50' y='82.00' width='7.20' height='68.50' fill='url(#pdotsL)'/><rect x='904.00' y='82.00' width='7.20' height='68.50' fill='url(#pdots)'/><rect x='887.00' y='78.80' width='28.40' height='75.40' fill='none' stroke='#c0a850' stroke-width='1.2'/><rect x='904.00' y='153.00' width='10.20' height='9.00' fill='url(#bluehatch2)'/><rect x='886.70' y='162.00' width='12.50' height='5.00' fill='url(#bandred)'/><rect x='903.70' y='162.00' width='22.10' height='5.00' fill='url(#banddots)'/><rect x='887.50' y='171.00' width='28.10' height='41.60' fill='#000' stroke='#14a85c' stroke-width='1.1'/><rect x='888.60' y='172.10' width='26.10' height='38.10' fill='#1818dc'/><rect x='892.50' y='175.00' width='6.20' height='33.00' fill='url(#ndots)'/><rect x='904.00' y='175.00' width='7.20' height='33.00' fill='url(#ndots)'/><rect x='889.80' y='212.80' width='23.00' height='13.40' fill='#000' stroke='#c09078' stroke-width='1.1'/><rect x='891.20' y='213.60' width='20.40' height='11.00' fill='#1a16c0'/><rect x='898.60' y='78.60' width='5.20' height='132.80' fill='#ff0a0a'/><rect x='922.75' y='70.60' width='41.55' height='89.00' fill='url(#hatch)' stroke='#14b464' stroke-width='1.3'/><rect x='929.75' y='51.20' width='27.40' height='19.00' fill='url(#hatch)' stroke='#14b464' stroke-width='1.3'/><rect x='931.75' y='53.20' width='23.40' height='15.40' fill='none' stroke='#10a868' stroke-width='1' stroke-dasharray='2 1.5'/><rect x='932.05' y='54.60' width='23.40' height='12.00' fill='url(#taphatch)'/><rect x='932.05' y='66.60' width='9.70' height='15.40' fill='url(#bluehatch)'/><rect x='931.15' y='80.00' width='24.20' height='73.00' fill='#1818dc'/><rect x='933.05' y='82.00' width='7.20' height='68.50' fill='url(#pdotsL)'/><rect x='945.55' y='82.00' width='7.20' height='68.50' fill='url(#pdots)'/><rect x='928.55' y='78.80' width='28.40' height='75.40' fill='none' stroke='#c0a850' stroke-width='1.2'/><rect x='945.55' y='153.00' width='10.20' height='9.00' fill='url(#bluehatch2)'/><rect x='928.25' y='162.00' width='12.50' height='5.00' fill='url(#bandred)'/><rect x='945.25' y='162.00' width='22.10' height='5.00' fill='url(#banddots)'/><rect x='929.05' y='171.00' width='28.10' height='41.60' fill='#000' stroke='#14a85c' stroke-width='1.1'/><rect x='930.15' y='172.10' width='26.10' height='38.10' fill='#1818dc'/><rect x='934.05' y='175.00' width='6.20' height='33.00' fill='url(#ndots)'/><rect x='945.55' y='175.00' width='7.20' height='33.00' fill='url(#ndots)'/><rect x='931.35' y='212.80' width='23.00' height='13.40' fill='#000' stroke='#c09078' stroke-width='1.1'/><rect x='932.75' y='213.60' width='20.40' height='11.00' fill='#1a16c0'/><rect x='940.15' y='78.60' width='5.20' height='132.80' fill='#ff0a0a'/><rect x='964.30' y='70.60' width='41.55' height='89.00' fill='url(#hatch)' stroke='#14b464' stroke-width='1.3'/><rect x='971.30' y='51.20' width='27.40' height='19.00' fill='url(#hatch)' stroke='#14b464' stroke-width='1.3'/><rect x='973.30' y='53.20' width='23.40' height='15.40' fill='none' stroke='#10a868' stroke-width='1' stroke-dasharray='2 1.5'/><rect x='973.60' y='54.60' width='23.40' height='12.00' fill='url(#taphatch)'/><rect x='973.60' y='66.60' width='9.70' height='15.40' fill='url(#bluehatch)'/><rect x='972.70' y='80.00' width='24.20' height='73.00' fill='#1818dc'/><rect x='974.60' y='82.00' width='7.20' height='68.50' fill='url(#pdotsL)'/><rect x='987.10' y='82.00' width='7.20' height='68.50' fill='url(#pdots)'/><rect x='970.10' y='78.80' width='28.40' height='75.40' fill='none' stroke='#c0a850' stroke-width='1.2'/><rect x='987.10' y='153.00' width='10.20' height='9.00' fill='url(#bluehatch2)'/><rect x='969.80' y='162.00' width='12.50' height='5.00' fill='url(#bandred)'/><rect x='986.80' y='162.00' width='22.10' height='5.00' fill='url(#banddots)'/><rect x='970.60' y='171.00' width='28.10' height='41.60' fill='#000' stroke='#14a85c' stroke-width='1.1'/><rect x='971.70' y='172.10' width='26.10' height='38.10' fill='#1818dc'/><rect x='975.60' y='175.00' width='6.20' height='33.00' fill='url(#ndots)'/><rect x='987.10' y='175.00' width='7.20' height='33.00' fill='url(#ndots)'/><rect x='972.90' y='212.80' width='23.00' height='13.40' fill='#000' stroke='#c09078' stroke-width='1.1'/><rect x='974.30' y='213.60' width='20.40' height='11.00' fill='#1a16c0'/><rect x='981.70' y='78.60' width='5.20' height='132.80' fill='#ff0a0a'/><rect x='1005.85' y='70.60' width='41.55' height='89.00' fill='url(#hatch)' stroke='#14b464' stroke-width='1.3'/><rect x='1012.85' y='51.20' width='27.40' height='19.00' fill='url(#hatch)' stroke='#14b464' stroke-width='1.3'/><rect x='1014.85' y='53.20' width='23.40' height='15.40' fill='none' stroke='#10a868' stroke-width='1' stroke-dasharray='2 1.5'/><rect x='1015.15' y='54.60' width='23.40' height='12.00' fill='url(#taphatch)'/><rect x='1015.15' y='66.60' width='9.70' height='15.40' fill='url(#bluehatch)'/><rect x='1014.25' y='80.00' width='24.20' height='73.00' fill='#1818dc'/><rect x='1016.15' y='82.00' width='7.20' height='68.50' fill='url(#pdotsL)'/><rect x='1028.65' y='82.00' width='7.20' height='68.50' fill='url(#pdots)'/><rect x='1011.65' y='78.80' width='28.40' height='75.40' fill='none' stroke='#c0a850' stroke-width='1.2'/><rect x='1028.65' y='153.00' width='10.20' height='9.00' fill='url(#bluehatch2)'/><rect x='1011.35' y='162.00' width='12.50' height='5.00' fill='url(#bandred)'/><rect x='1028.35' y='162.00' width='22.10' height='5.00' fill='url(#banddots)'/><rect x='1012.15' y='171.00' width='28.10' height='41.60' fill='#000' stroke='#14a85c' stroke-width='1.1'/><rect x='1013.25' y='172.10' width='26.10' height='38.10' fill='#1818dc'/><rect x='1017.15' y='175.00' width='6.20' height='33.00' fill='url(#ndots)'/><rect x='1028.65' y='175.00' width='7.20' height='33.00' fill='url(#ndots)'/><rect x='1014.45' y='212.80' width='23.00' height='13.40' fill='#000' stroke='#c09078' stroke-width='1.1'/><rect x='1015.85' y='213.60' width='20.40' height='11.00' fill='#1a16c0'/><rect x='1023.25' y='78.60' width='5.20' height='132.80' fill='#ff0a0a'/><rect x='1047.40' y='70.60' width='41.55' height='89.00' fill='url(#hatch)' stroke='#14b464' stroke-width='1.3'/><rect x='1054.40' y='51.20' width='27.40' height='19.00' fill='url(#hatch)' stroke='#14b464' stroke-width='1.3'/><rect x='1056.40' y='53.20' width='23.40' height='15.40' fill='none' stroke='#10a868' stroke-width='1' stroke-dasharray='2 1.5'/><rect x='1056.70' y='54.60' width='23.40' height='12.00' fill='url(#taphatch)'/><rect x='1056.70' y='66.60' width='9.70' height='15.40' fill='url(#bluehatch)'/><rect x='1055.80' y='80.00' width='24.20' height='73.00' fill='#1818dc'/><rect x='1057.70' y='82.00' width='7.20' height='68.50' fill='url(#pdotsL)'/><rect x='1070.20' y='82.00' width='7.20' height='68.50' fill='url(#pdots)'/><rect x='1053.20' y='78.80' width='28.40' height='75.40' fill='none' stroke='#c0a850' stroke-width='1.2'/><rect x='1070.20' y='153.00' width='10.20' height='9.00' fill='url(#bluehatch2)'/><rect x='1052.90' y='162.00' width='12.50' height='5.00' fill='url(#bandred)'/><rect x='1069.90' y='162.00' width='22.10' height='5.00' fill='url(#banddots)'/><rect x='1053.70' y='171.00' width='28.10' height='41.60' fill='#000' stroke='#14a85c' stroke-width='1.1'/><rect x='1054.80' y='172.10' width='26.10' height='38.10' fill='#1818dc'/><rect x='1058.70' y='175.00' width='6.20' height='33.00' fill='url(#ndots)'/><rect x='1070.20' y='175.00' width='7.20' height='33.00' fill='url(#ndots)'/><rect x='1056.00' y='212.80' width='23.00' height='13.40' fill='#000' stroke='#c09078' stroke-width='1.1'/><rect x='1057.40' y='213.60' width='20.40' height='11.00' fill='#1a16c0'/><rect x='1064.80' y='78.60' width='5.20' height='132.80' fill='#ff0a0a'/><rect x='1088.95' y='70.60' width='41.55' height='89.00' fill='url(#hatch)' stroke='#14b464' stroke-width='1.3'/><rect x='1095.95' y='51.20' width='27.40' height='19.00' fill='url(#hatch)' stroke='#14b464' stroke-width='1.3'/><rect x='1097.95' y='53.20' width='23.40' height='15.40' fill='none' stroke='#10a868' stroke-width='1' stroke-dasharray='2 1.5'/><rect x='1098.25' y='54.60' width='23.40' height='12.00' fill='url(#taphatch)'/><rect x='1098.25' y='66.60' width='9.70' height='15.40' fill='url(#bluehatch)'/><rect x='1097.35' y='80.00' width='24.20' height='73.00' fill='#1818dc'/><rect x='1099.25' y='82.00' width='7.20' height='68.50' fill='url(#pdotsL)'/><rect x='1111.75' y='82.00' width='7.20' height='68.50' fill='url(#pdots)'/><rect x='1094.75' y='78.80' width='28.40' height='75.40' fill='none' stroke='#c0a850' stroke-width='1.2'/><rect x='1111.75' y='153.00' width='10.20' height='9.00' fill='url(#bluehatch2)'/><rect x='1094.45' y='162.00' width='12.50' height='5.00' fill='url(#bandred)'/><rect x='1111.45' y='162.00' width='22.10' height='5.00' fill='url(#banddots)'/><rect x='1095.25' y='171.00' width='28.10' height='41.60' fill='#000' stroke='#14a85c' stroke-width='1.1'/><rect x='1096.35' y='172.10' width='26.10' height='38.10' fill='#1818dc'/><rect x='1100.25' y='175.00' width='6.20' height='33.00' fill='url(#ndots)'/><rect x='1111.75' y='175.00' width='7.20' height='33.00' fill='url(#ndots)'/><rect x='1097.55' y='212.80' width='23.00' height='13.40' fill='#000' stroke='#c09078' stroke-width='1.1'/><rect x='1098.95' y='213.60' width='20.40' height='11.00' fill='#1a16c0'/><rect x='1106.35' y='78.60' width='5.20' height='132.80' fill='#ff0a0a'/><rect x='1130.50' y='70.60' width='41.55' height='89.00' fill='url(#hatch)' stroke='#14b464' stroke-width='1.3'/><rect x='1137.50' y='51.20' width='27.40' height='19.00' fill='url(#hatch)' stroke='#14b464' stroke-width='1.3'/><rect x='1139.50' y='53.20' width='23.40' height='15.40' fill='none' stroke='#10a868' stroke-width='1' stroke-dasharray='2 1.5'/><rect x='1139.80' y='54.60' width='23.40' height='12.00' fill='url(#taphatch)'/><rect x='1139.80' y='66.60' width='9.70' height='15.40' fill='url(#bluehatch)'/><rect x='1138.90' y='80.00' width='24.20' height='73.00' fill='#1818dc'/><rect x='1140.80' y='82.00' width='7.20' height='68.50' fill='url(#pdotsL)'/><rect x='1153.30' y='82.00' width='7.20' height='68.50' fill='url(#pdots)'/><rect x='1136.30' y='78.80' width='28.40' height='75.40' fill='none' stroke='#c0a850' stroke-width='1.2'/><rect x='1153.30' y='153.00' width='10.20' height='9.00' fill='url(#bluehatch2)'/><rect x='1136.00' y='162.00' width='12.50' height='5.00' fill='url(#bandred)'/><rect x='1153.00' y='162.00' width='22.10' height='5.00' fill='url(#banddots)'/><rect x='1136.80' y='171.00' width='28.10' height='41.60' fill='#000' stroke='#14a85c' stroke-width='1.1'/><rect x='1137.90' y='172.10' width='26.10' height='38.10' fill='#1818dc'/><rect x='1141.80' y='175.00' width='6.20' height='33.00' fill='url(#ndots)'/><rect x='1153.30' y='175.00' width='7.20' height='33.00' fill='url(#ndots)'/><rect x='1139.10' y='212.80' width='23.00' height='13.40' fill='#000' stroke='#c09078' stroke-width='1.1'/><rect x='1140.50' y='213.60' width='20.40' height='11.00' fill='#1a16c0'/><rect x='1147.90' y='78.60' width='5.20' height='132.80' fill='#ff0a0a'/><rect x='1172.05' y='70.60' width='41.55' height='89.00' fill='url(#hatch)' stroke='#14b464' stroke-width='1.3'/><rect x='1179.05' y='51.20' width='27.40' height='19.00' fill='url(#hatch)' stroke='#14b464' stroke-width='1.3'/><rect x='1181.05' y='53.20' width='23.40' height='15.40' fill='none' stroke='#10a868' stroke-width='1' stroke-dasharray='2 1.5'/><rect x='1181.35' y='54.60' width='23.40' height='12.00' fill='url(#taphatch)'/><rect x='1181.35' y='66.60' width='9.70' height='15.40' fill='url(#bluehatch)'/><rect x='1180.45' y='80.00' width='24.20' height='73.00' fill='#1818dc'/><rect x='1182.35' y='82.00' width='7.20' height='68.50' fill='url(#pdotsL)'/><rect x='1194.85' y='82.00' width='7.20' height='68.50' fill='url(#pdots)'/><rect x='1177.85' y='78.80' width='28.40' height='75.40' fill='none' stroke='#c0a850' stroke-width='1.2'/><rect x='1194.85' y='153.00' width='10.20' height='9.00' fill='url(#bluehatch2)'/><rect x='1177.55' y='162.00' width='12.50' height='5.00' fill='url(#bandred)'/><rect x='1194.55' y='162.00' width='22.10' height='5.00' fill='url(#banddots)'/><rect x='1178.35' y='171.00' width='28.10' height='41.60' fill='#000' stroke='#14a85c' stroke-width='1.1'/><rect x='1179.45' y='172.10' width='26.10' height='38.10' fill='#1818dc'/><rect x='1183.35' y='175.00' width='6.20' height='33.00' fill='url(#ndots)'/><rect x='1194.85' y='175.00' width='7.20' height='33.00' fill='url(#ndots)'/><rect x='1180.65' y='212.80' width='23.00' height='13.40' fill='#000' stroke='#c09078' stroke-width='1.1'/><rect x='1182.05' y='213.60' width='20.40' height='11.00' fill='#1a16c0'/><rect x='1189.45' y='78.60' width='5.20' height='132.80' fill='#ff0a0a'/><rect x='1213.60' y='70.60' width='41.55' height='89.00' fill='url(#hatch)' stroke='#14b464' stroke-width='1.3'/><rect x='1220.60' y='51.20' width='27.40' height='19.00' fill='url(#hatch)' stroke='#14b464' stroke-width='1.3'/><rect x='1222.60' y='53.20' width='23.40' height='15.40' fill='none' stroke='#10a868' stroke-width='1' stroke-dasharray='2 1.5'/><rect x='1222.90' y='54.60' width='23.40' height='12.00' fill='url(#taphatch)'/><rect x='1222.90' y='66.60' width='9.70' height='15.40' fill='url(#bluehatch)'/><rect x='1222.00' y='80.00' width='24.20' height='73.00' fill='#1818dc'/><rect x='1223.90' y='82.00' width='7.20' height='68.50' fill='url(#pdotsL)'/><rect x='1236.40' y='82.00' width='7.20' height='68.50' fill='url(#pdots)'/><rect x='1219.40' y='78.80' width='28.40' height='75.40' fill='none' stroke='#c0a850' stroke-width='1.2'/><rect x='1236.40' y='153.00' width='10.20' height='9.00' fill='url(#bluehatch2)'/><rect x='1219.10' y='162.00' width='12.50' height='5.00' fill='url(#bandred)'/><rect x='1236.10' y='162.00' width='22.10' height='5.00' fill='url(#banddots)'/><rect x='1219.90' y='171.00' width='28.10' height='41.60' fill='#000' stroke='#14a85c' stroke-width='1.1'/><rect x='1221.00' y='172.10' width='26.10' height='38.10' fill='#1818dc'/><rect x='1224.90' y='175.00' width='6.20' height='33.00' fill='url(#ndots)'/><rect x='1236.40' y='175.00' width='7.20' height='33.00' fill='url(#ndots)'/><rect x='1222.20' y='212.80' width='23.00' height='13.40' fill='#000' stroke='#c09078' stroke-width='1.1'/><rect x='1223.60' y='213.60' width='20.40' height='11.00' fill='#1a16c0'/><rect x='1231.00' y='78.60' width='5.20' height='132.80' fill='#ff0a0a'/><rect x='1255.15' y='70.60' width='41.55' height='89.00' fill='url(#hatch)' stroke='#14b464' stroke-width='1.3'/><rect x='1262.15' y='51.20' width='27.40' height='19.00' fill='url(#hatch)' stroke='#14b464' stroke-width='1.3'/><rect x='1264.15' y='53.20' width='23.40' height='15.40' fill='none' stroke='#10a868' stroke-width='1' stroke-dasharray='2 1.5'/><rect x='1264.45' y='54.60' width='23.40' height='12.00' fill='url(#taphatch)'/><rect x='1264.45' y='66.60' width='9.70' height='15.40' fill='url(#bluehatch)'/><rect x='1263.55' y='80.00' width='24.20' height='73.00' fill='#1818dc'/><rect x='1265.45' y='82.00' width='7.20' height='68.50' fill='url(#pdotsL)'/><rect x='1277.95' y='82.00' width='7.20' height='68.50' fill='url(#pdots)'/><rect x='1260.95' y='78.80' width='28.40' height='75.40' fill='none' stroke='#c0a850' stroke-width='1.2'/><rect x='1277.95' y='153.00' width='10.20' height='9.00' fill='url(#bluehatch2)'/><rect x='1260.65' y='162.00' width='12.50' height='5.00' fill='url(#bandred)'/><rect x='1277.65' y='162.00' width='22.10' height='5.00' fill='url(#banddots)'/><rect x='1261.45' y='171.00' width='28.10' height='41.60' fill='#000' stroke='#14a85c' stroke-width='1.1'/><rect x='1262.55' y='172.10' width='26.10' height='38.10' fill='#1818dc'/><rect x='1266.45' y='175.00' width='6.20' height='33.00' fill='url(#ndots)'/><rect x='1277.95' y='175.00' width='7.20' height='33.00' fill='url(#ndots)'/><rect x='1263.75' y='212.80' width='23.00' height='13.40' fill='#000' stroke='#c09078' stroke-width='1.1'/><rect x='1265.15' y='213.60' width='20.40' height='11.00' fill='#1a16c0'/><rect x='1272.55' y='78.60' width='5.20' height='132.80' fill='#ff0a0a'/><rect x='1296.70' y='70.60' width='43.00' height='89.00' fill='url(#hatch)' stroke='#14b464' stroke-width='1.3'/><rect x='1303.70' y='51.20' width='27.40' height='19.00' fill='url(#hatch)' stroke='#14b464' stroke-width='1.3'/><rect x='1305.70' y='53.20' width='23.40' height='15.40' fill='none' stroke='#10a868' stroke-width='1' stroke-dasharray='2 1.5'/><rect x='1306.00' y='54.60' width='23.40' height='12.00' fill='url(#taphatch)'/><rect x='1306.00' y='66.60' width='9.70' height='15.40' fill='url(#bluehatch)'/><rect x='1305.10' y='80.00' width='24.20' height='73.00' fill='#1818dc'/><rect x='1307.00' y='82.00' width='7.20' height='68.50' fill='url(#pdotsL)'/><rect x='1319.50' y='82.00' width='7.20' height='68.50' fill='url(#pdots)'/><rect x='1302.50' y='78.80' width='28.40' height='75.40' fill='none' stroke='#c0a850' stroke-width='1.2'/><rect x='1319.50' y='153.00' width='10.20' height='9.00' fill='url(#bluehatch2)'/><rect x='1302.20' y='162.00' width='12.50' height='5.00' fill='url(#bandred)'/><rect x='1319.20' y='162.00' width='22.10' height='5.00' fill='url(#banddots)'/><rect x='1303.00' y='171.00' width='28.10' height='41.60' fill='#000' stroke='#14a85c' stroke-width='1.1'/><rect x='1304.10' y='172.10' width='26.10' height='38.10' fill='#1818dc'/><rect x='1308.00' y='175.00' width='6.20' height='33.00' fill='url(#ndots)'/><rect x='1319.50' y='175.00' width='7.20' height='33.00' fill='url(#ndots)'/><rect x='1305.30' y='212.80' width='23.00' height='13.40' fill='#000' stroke='#c09078' stroke-width='1.1'/><rect x='1306.70' y='213.60' width='20.40' height='11.00' fill='#1a16c0'/><rect x='1314.10' y='78.60' width='5.20' height='132.80' fill='#ff0a0a'/><rect x='42.00' y='160.20' width='1303.50' height='2.10' fill='#c420d0' opacity='0.85'/><path d='M111.65 56v11M111.65 214v12M153.20 56v11M153.20 214v12M194.75 56v11M194.75 214v12M236.30 56v11M236.30 214v12M277.85 56v11M277.85 214v12M319.40 56v11M319.40 214v12M360.95 56v11M360.95 214v12M402.50 56v11M402.50 214v12M444.05 56v11M444.05 214v12M485.60 56v11M485.60 214v12M527.15 56v11M527.15 214v12M568.70 56v11M568.70 214v12M610.25 56v11M610.25 214v12M651.80 56v11M651.80 214v12M693.35 56v11M693.35 214v12M734.90 56v11M734.90 214v12M776.45 56v11M776.45 214v12M818.00 56v11M818.00 214v12M859.55 56v11M859.55 214v12M901.10 56v11M901.10 214v12M942.65 56v11M942.65 214v12M984.20 56v11M984.20 214v12M1025.75 56v11M1025.75 214v12M1067.30 56v11M1067.30 214v12M1108.85 56v11M1108.85 214v12M1150.40 56v11M1150.40 214v12M1191.95 56v11M1191.95 214v12M1233.50 56v11M1233.50 214v12M1275.05 56v11M1275.05 214v12M1316.60 56v11M1316.60 214v12' stroke='#fff' stroke-width='1' opacity='.85' fill='none'/><g font-family='Liberation Sans, sans-serif' font-size='8.4' fill='#fff'><text x='61.6' y='64.1'>vdd!</text><text x='61.6' y='222.4'>gnd!</text><text x='103.2' y='64.1'>vdd!</text><text x='103.2' y='222.4'>gnd!</text><text x='144.7' y='64.1'>vdd!</text><text x='144.7' y='222.4'>gnd!</text><text x='186.2' y='64.1'>vdd!</text><text x='186.2' y='222.4'>gnd!</text><text x='227.8' y='64.1'>vdd!</text><text x='227.8' y='222.4'>gnd!</text><text x='269.3' y='64.1'>vdd!</text><text x='269.3' y='222.4'>gnd!</text><text x='310.9' y='64.1'>vdd!</text><text x='310.9' y='222.4'>gnd!</text><text x='352.4' y='64.1'>vdd!</text><text x='352.4' y='222.4'>gnd!</text><text x='394.0' y='64.1'>vdd!</text><text x='394.0' y='222.4'>gnd!</text><text x='435.5' y='64.1'>vdd!</text><text x='435.5' y='222.4'>gnd!</text><text x='477.1' y='64.1'>vdd!</text><text x='477.1' y='222.4'>gnd!</text><text x='518.6' y='64.1'>vdd!</text><text x='518.6' y='222.4'>gnd!</text><text x='560.2' y='64.1'>vdd!</text><text x='560.2' y='222.4'>gnd!</text><text x='601.8' y='64.1'>vdd!</text><text x='601.8' y='222.4'>gnd!</text><text x='643.3' y='64.1'>vdd!</text><text x='643.3' y='222.4'>gnd!</text><text x='684.9' y='64.1'>vdd!</text><text x='684.9' y='222.4'>gnd!</text><text x='726.4' y='64.1'>vdd!</text><text x='726.4' y='222.4'>gnd!</text><text x='767.9' y='64.1'>vdd!</text><text x='767.9' y='222.4'>gnd!</text><text x='809.5' y='64.1'>vdd!</text><text x='809.5' y='222.4'>gnd!</text><text x='851.0' y='64.1'>vdd!</text><text x='851.0' y='222.4'>gnd!</text><text x='892.6' y='64.1'>vdd!</text><text x='892.6' y='222.4'>gnd!</text><text x='934.1' y='64.1'>vdd!</text><text x='934.1' y='222.4'>gnd!</text><text x='975.7' y='64.1'>vdd!</text><text x='975.7' y='222.4'>gnd!</text><text x='1017.2' y='64.1'>vdd!</text><text x='1017.2' y='222.4'>gnd!</text><text x='1058.8' y='64.1'>vdd!</text><text x='1058.8' y='222.4'>gnd!</text><text x='1100.4' y='64.1'>vdd!</text><text x='1100.4' y='222.4'>gnd!</text><text x='1141.9' y='64.1'>vdd!</text><text x='1141.9' y='222.4'>gnd!</text><text x='1183.5' y='64.1'>vdd!</text><text x='1183.5' y='222.4'>gnd!</text><text x='1225.0' y='64.1'>vdd!</text><text x='1225.0' y='222.4'>gnd!</text><text x='1266.5' y='64.1'>vdd!</text><text x='1266.5' y='222.4'>gnd!</text><text x='1308.1' y='64.1'>vdd!</text><text x='1308.1' y='222.4'>gnd!</text><text x='1332.5' y='64.1'>vdd!</text><text x='1332.5' y='222.4'>gnd!</text><text x='1311' y='167.5'>osc_out</text></g><rect x='0' y='166.8' width='1386' height='1.3' fill='#fff'/><rect x='69.5' y='0' width='1.4' height='92' fill='#fff'/><rect x='69.5' y='140' width='1.4' height='70' fill='#fff' opacity='.55'/><path d='M11.17 23.40h3M12.67 21.90v3M11.17 52.27h3M12.67 50.77v3M11.17 81.14h3M12.67 79.64v3M11.17 110.01h3M12.67 108.51v3M11.17 138.88h3M12.67 137.38v3M11.17 167.75h3M12.67 166.25v3M11.17 196.62h3M12.67 195.12v3M11.17 225.49h3M12.67 223.99v3M11.17 254.36h3M12.67 252.86v3M11.17 283.23h3M12.67 281.73v3M11.17 312.10h3M12.67 310.60v3M11.17 340.97h3M12.67 339.47v3M11.17 369.84h3M12.67 368.34v3M11.17 398.71h3M12.67 397.21v3M11.17 427.58h3M12.67 426.08v3M11.17 456.45h3M12.67 454.95v3M11.17 485.32h3M12.67 483.82v3M11.17 514.19h3M12.67 512.69v3M11.17 543.06h3M12.67 541.56v3M11.17 571.93h3M12.67 570.43v3M11.17 600.80h3M12.67 599.30v3M11.17 629.67h3M12.67 628.17v3M40.04 23.40h3M41.54 21.90v3M40.04 52.27h3M41.54 50.77v3M40.04 81.14h3M41.54 79.64v3M40.04 110.01h3M41.54 108.51v3M40.04 138.88h3M41.54 137.38v3M40.04 167.75h3M41.54 166.25v3M40.04 196.62h3M41.54 195.12v3M40.04 225.49h3M41.54 223.99v3M40.04 254.36h3M41.54 252.86v3M40.04 283.23h3M41.54 281.73v3M40.04 312.10h3M41.54 310.60v3M40.04 340.97h3M41.54 339.47v3M40.04 369.84h3M41.54 368.34v3M40.04 398.71h3M41.54 397.21v3M40.04 427.58h3M41.54 426.08v3M40.04 456.45h3M41.54 454.95v3M40.04 485.32h3M41.54 483.82v3M40.04 514.19h3M41.54 512.69v3M40.04 543.06h3M41.54 541.56v3M40.04 571.93h3M41.54 570.43v3M40.04 600.80h3M41.54 599.30v3M40.04 629.67h3M41.54 628.17v3M68.91 23.40h3M70.41 21.90v3M68.91 52.27h3M70.41 50.77v3M68.91 81.14h3M70.41 79.64v3M68.91 110.01h3M70.41 108.51v3M68.91 138.88h3M70.41 137.38v3M68.91 167.75h3M70.41 166.25v3M68.91 196.62h3M70.41 195.12v3M68.91 225.49h3M70.41 223.99v3M68.91 254.36h3M70.41 252.86v3M68.91 283.23h3M70.41 281.73v3M68.91 312.10h3M70.41 310.60v3M68.91 340.97h3M70.41 339.47v3M68.91 369.84h3M70.41 368.34v3M68.91 398.71h3M70.41 397.21v3M68.91 427.58h3M70.41 426.08v3M68.91 456.45h3M70.41 454.95v3M68.91 485.32h3M70.41 483.82v3M68.91 514.19h3M70.41 512.69v3M68.91 543.06h3M70.41 541.56v3M68.91 571.93h3M70.41 570.43v3M68.91 600.80h3M70.41 599.30v3M68.91 629.67h3M70.41 628.17v3M97.78 23.40h3M99.28 21.90v3M97.78 52.27h3M99.28 50.77v3M97.78 81.14h3M99.28 79.64v3M97.78 110.01h3M99.28 108.51v3M97.78 138.88h3M99.28 137.38v3M97.78 167.75h3M99.28 166.25v3M97.78 196.62h3M99.28 195.12v3M97.78 225.49h3M99.28 223.99v3M97.78 254.36h3M99.28 252.86v3M97.78 283.23h3M99.28 281.73v3M97.78 312.10h3M99.28 310.60v3M97.78 340.97h3M99.28 339.47v3M97.78 369.84h3M99.28 368.34v3M97.78 398.71h3M99.28 397.21v3M97.78 427.58h3M99.28 426.08v3M97.78 456.45h3M99.28 454.95v3M97.78 485.32h3M99.28 483.82v3M97.78 514.19h3M99.28 512.69v3M97.78 543.06h3M99.28 541.56v3M97.78 571.93h3M99.28 570.43v3M97.78 600.80h3M99.28 599.30v3M97.78 629.67h3M99.28 628.17v3M126.65 23.40h3M128.15 21.90v3M126.65 52.27h3M128.15 50.77v3M126.65 81.14h3M128.15 79.64v3M126.65 110.01h3M128.15 108.51v3M126.65 138.88h3M128.15 137.38v3M126.65 167.75h3M128.15 166.25v3M126.65 196.62h3M128.15 195.12v3M126.65 225.49h3M128.15 223.99v3M126.65 254.36h3M128.15 252.86v3M126.65 283.23h3M128.15 281.73v3M126.65 312.10h3M128.15 310.60v3M126.65 340.97h3M128.15 339.47v3M126.65 369.84h3M128.15 368.34v3M126.65 398.71h3M128.15 397.21v3M126.65 427.58h3M128.15 426.08v3M126.65 456.45h3M128.15 454.95v3M126.65 485.32h3M128.15 483.82v3M126.65 514.19h3M128.15 512.69v3M126.65 543.06h3M128.15 541.56v3M126.65 571.93h3M128.15 570.43v3M126.65 600.80h3M128.15 599.30v3M126.65 629.67h3M128.15 628.17v3M155.52 23.40h3M157.02 21.90v3M155.52 52.27h3M157.02 50.77v3M155.52 81.14h3M157.02 79.64v3M155.52 110.01h3M157.02 108.51v3M155.52 138.88h3M157.02 137.38v3M155.52 167.75h3M157.02 166.25v3M155.52 196.62h3M157.02 195.12v3M155.52 225.49h3M157.02 223.99v3M155.52 254.36h3M157.02 252.86v3M155.52 283.23h3M157.02 281.73v3M155.52 312.10h3M157.02 310.60v3M155.52 340.97h3M157.02 339.47v3M155.52 369.84h3M157.02 368.34v3M155.52 398.71h3M157.02 397.21v3M155.52 427.58h3M157.02 426.08v3M155.52 456.45h3M157.02 454.95v3M155.52 485.32h3M157.02 483.82v3M155.52 514.19h3M157.02 512.69v3M155.52 543.06h3M157.02 541.56v3M155.52 571.93h3M157.02 570.43v3M155.52 600.80h3M157.02 599.30v3M155.52 629.67h3M157.02 628.17v3M184.39 23.40h3M185.89 21.90v3M184.39 52.27h3M185.89 50.77v3M184.39 81.14h3M185.89 79.64v3M184.39 110.01h3M185.89 108.51v3M184.39 138.88h3M185.89 137.38v3M184.39 167.75h3M185.89 166.25v3M184.39 196.62h3M185.89 195.12v3M184.39 225.49h3M185.89 223.99v3M184.39 254.36h3M185.89 252.86v3M184.39 283.23h3M185.89 281.73v3M184.39 312.10h3M185.89 310.60v3M184.39 340.97h3M185.89 339.47v3M184.39 369.84h3M185.89 368.34v3M184.39 398.71h3M185.89 397.21v3M184.39 427.58h3M185.89 426.08v3M184.39 456.45h3M185.89 454.95v3M184.39 485.32h3M185.89 483.82v3M184.39 514.19h3M185.89 512.69v3M184.39 543.06h3M185.89 541.56v3M184.39 571.93h3M185.89 570.43v3M184.39 600.80h3M185.89 599.30v3M184.39 629.67h3M185.89 628.17v3M213.26 23.40h3M214.76 21.90v3M213.26 52.27h3M214.76 50.77v3M213.26 81.14h3M214.76 79.64v3M213.26 110.01h3M214.76 108.51v3M213.26 138.88h3M214.76 137.38v3M213.26 167.75h3M214.76 166.25v3M213.26 196.62h3M214.76 195.12v3M213.26 225.49h3M214.76 223.99v3M213.26 254.36h3M214.76 252.86v3M213.26 283.23h3M214.76 281.73v3M213.26 312.10h3M214.76 310.60v3M213.26 340.97h3M214.76 339.47v3M213.26 369.84h3M214.76 368.34v3M213.26 398.71h3M214.76 397.21v3M213.26 427.58h3M214.76 426.08v3M213.26 456.45h3M214.76 454.95v3M213.26 485.32h3M214.76 483.82v3M213.26 514.19h3M214.76 512.69v3M213.26 543.06h3M214.76 541.56v3M213.26 571.93h3M214.76 570.43v3M213.26 600.80h3M214.76 599.30v3M213.26 629.67h3M214.76 628.17v3M242.13 23.40h3M243.63 21.90v3M242.13 52.27h3M243.63 50.77v3M242.13 81.14h3M243.63 79.64v3M242.13 110.01h3M243.63 108.51v3M242.13 138.88h3M243.63 137.38v3M242.13 167.75h3M243.63 166.25v3M242.13 196.62h3M243.63 195.12v3M242.13 225.49h3M243.63 223.99v3M242.13 254.36h3M243.63 252.86v3M242.13 283.23h3M243.63 281.73v3M242.13 312.10h3M243.63 310.60v3M242.13 340.97h3M243.63 339.47v3M242.13 369.84h3M243.63 368.34v3M242.13 398.71h3M243.63 397.21v3M242.13 427.58h3M243.63 426.08v3M242.13 456.45h3M243.63 454.95v3M242.13 485.32h3M243.63 483.82v3M242.13 514.19h3M243.63 512.69v3M242.13 543.06h3M243.63 541.56v3M242.13 571.93h3M243.63 570.43v3M242.13 600.80h3M243.63 599.30v3M242.13 629.67h3M243.63 628.17v3M271.00 23.40h3M272.50 21.90v3M271.00 52.27h3M272.50 50.77v3M271.00 81.14h3M272.50 79.64v3M271.00 110.01h3M272.50 108.51v3M271.00 138.88h3M272.50 137.38v3M271.00 167.75h3M272.50 166.25v3M271.00 196.62h3M272.50 195.12v3M271.00 225.49h3M272.50 223.99v3M271.00 254.36h3M272.50 252.86v3M271.00 283.23h3M272.50 281.73v3M271.00 312.10h3M272.50 310.60v3M271.00 340.97h3M272.50 339.47v3M271.00 369.84h3M272.50 368.34v3M271.00 398.71h3M272.50 397.21v3M271.00 427.58h3M272.50 426.08v3M271.00 456.45h3M272.50 454.95v3M271.00 485.32h3M272.50 483.82v3M271.00 514.19h3M272.50 512.69v3M271.00 543.06h3M272.50 541.56v3M271.00 571.93h3M272.50 570.43v3M271.00 600.80h3M272.50 599.30v3M271.00 629.67h3M272.50 628.17v3M299.87 23.40h3M301.37 21.90v3M299.87 52.27h3M301.37 50.77v3M299.87 81.14h3M301.37 79.64v3M299.87 110.01h3M301.37 108.51v3M299.87 138.88h3M301.37 137.38v3M299.87 167.75h3M301.37 166.25v3M299.87 196.62h3M301.37 195.12v3M299.87 225.49h3M301.37 223.99v3M299.87 254.36h3M301.37 252.86v3M299.87 283.23h3M301.37 281.73v3M299.87 312.10h3M301.37 310.60v3M299.87 340.97h3M301.37 339.47v3M299.87 369.84h3M301.37 368.34v3M299.87 398.71h3M301.37 397.21v3M299.87 427.58h3M301.37 426.08v3M299.87 456.45h3M301.37 454.95v3M299.87 485.32h3M301.37 483.82v3M299.87 514.19h3M301.37 512.69v3M299.87 543.06h3M301.37 541.56v3M299.87 571.93h3M301.37 570.43v3M299.87 600.80h3M301.37 599.30v3M299.87 629.67h3M301.37 628.17v3M328.74 23.40h3M330.24 21.90v3M328.74 52.27h3M330.24 50.77v3M328.74 81.14h3M330.24 79.64v3M328.74 110.01h3M330.24 108.51v3M328.74 138.88h3M330.24 137.38v3M328.74 167.75h3M330.24 166.25v3M328.74 196.62h3M330.24 195.12v3M328.74 225.49h3M330.24 223.99v3M328.74 254.36h3M330.24 252.86v3M328.74 283.23h3M330.24 281.73v3M328.74 312.10h3M330.24 310.60v3M328.74 340.97h3M330.24 339.47v3M328.74 369.84h3M330.24 368.34v3M328.74 398.71h3M330.24 397.21v3M328.74 427.58h3M330.24 426.08v3M328.74 456.45h3M330.24 454.95v3M328.74 485.32h3M330.24 483.82v3M328.74 514.19h3M330.24 512.69v3M328.74 543.06h3M330.24 541.56v3M328.74 571.93h3M330.24 570.43v3M328.74 600.80h3M330.24 599.30v3M328.74 629.67h3M330.24 628.17v3M357.61 23.40h3M359.11 21.90v3M357.61 52.27h3M359.11 50.77v3M357.61 81.14h3M359.11 79.64v3M357.61 110.01h3M359.11 108.51v3M357.61 138.88h3M359.11 137.38v3M357.61 167.75h3M359.11 166.25v3M357.61 196.62h3M359.11 195.12v3M357.61 225.49h3M359.11 223.99v3M357.61 254.36h3M359.11 252.86v3M357.61 283.23h3M359.11 281.73v3M357.61 312.10h3M359.11 310.60v3M357.61 340.97h3M359.11 339.47v3M357.61 369.84h3M359.11 368.34v3M357.61 398.71h3M359.11 397.21v3M357.61 427.58h3M359.11 426.08v3M357.61 456.45h3M359.11 454.95v3M357.61 485.32h3M359.11 483.82v3M357.61 514.19h3M359.11 512.69v3M357.61 543.06h3M359.11 541.56v3M357.61 571.93h3M359.11 570.43v3M357.61 600.80h3M359.11 599.30v3M357.61 629.67h3M359.11 628.17v3M386.48 23.40h3M387.98 21.90v3M386.48 52.27h3M387.98 50.77v3M386.48 81.14h3M387.98 79.64v3M386.48 110.01h3M387.98 108.51v3M386.48 138.88h3M387.98 137.38v3M386.48 167.75h3M387.98 166.25v3M386.48 196.62h3M387.98 195.12v3M386.48 225.49h3M387.98 223.99v3M386.48 254.36h3M387.98 252.86v3M386.48 283.23h3M387.98 281.73v3M386.48 312.10h3M387.98 310.60v3M386.48 340.97h3M387.98 339.47v3M386.48 369.84h3M387.98 368.34v3M386.48 398.71h3M387.98 397.21v3M386.48 427.58h3M387.98 426.08v3M386.48 456.45h3M387.98 454.95v3M386.48 485.32h3M387.98 483.82v3M386.48 514.19h3M387.98 512.69v3M386.48 543.06h3M387.98 541.56v3M386.48 571.93h3M387.98 570.43v3M386.48 600.80h3M387.98 599.30v3M386.48 629.67h3M387.98 628.17v3M415.35 23.40h3M416.85 21.90v3M415.35 52.27h3M416.85 50.77v3M415.35 81.14h3M416.85 79.64v3M415.35 110.01h3M416.85 108.51v3M415.35 138.88h3M416.85 137.38v3M415.35 167.75h3M416.85 166.25v3M415.35 196.62h3M416.85 195.12v3M415.35 225.49h3M416.85 223.99v3M415.35 254.36h3M416.85 252.86v3M415.35 283.23h3M416.85 281.73v3M415.35 312.10h3M416.85 310.60v3M415.35 340.97h3M416.85 339.47v3M415.35 369.84h3M416.85 368.34v3M415.35 398.71h3M416.85 397.21v3M415.35 427.58h3M416.85 426.08v3M415.35 456.45h3M416.85 454.95v3M415.35 485.32h3M416.85 483.82v3M415.35 514.19h3M416.85 512.69v3M415.35 543.06h3M416.85 541.56v3M415.35 571.93h3M416.85 570.43v3M415.35 600.80h3M416.85 599.30v3M415.35 629.67h3M416.85 628.17v3M444.22 23.40h3M445.72 21.90v3M444.22 52.27h3M445.72 50.77v3M444.22 81.14h3M445.72 79.64v3M444.22 110.01h3M445.72 108.51v3M444.22 138.88h3M445.72 137.38v3M444.22 167.75h3M445.72 166.25v3M444.22 196.62h3M445.72 195.12v3M444.22 225.49h3M445.72 223.99v3M444.22 254.36h3M445.72 252.86v3M444.22 283.23h3M445.72 281.73v3M444.22 312.10h3M445.72 310.60v3M444.22 340.97h3M445.72 339.47v3M444.22 369.84h3M445.72 368.34v3M444.22 398.71h3M445.72 397.21v3M444.22 427.58h3M445.72 426.08v3M444.22 456.45h3M445.72 454.95v3M444.22 485.32h3M445.72 483.82v3M444.22 514.19h3M445.72 512.69v3M444.22 543.06h3M445.72 541.56v3M444.22 571.93h3M445.72 570.43v3M444.22 600.80h3M445.72 599.30v3M444.22 629.67h3M445.72 628.17v3M473.09 23.40h3M474.59 21.90v3M473.09 52.27h3M474.59 50.77v3M473.09 81.14h3M474.59 79.64v3M473.09 110.01h3M474.59 108.51v3M473.09 138.88h3M474.59 137.38v3M473.09 167.75h3M474.59 166.25v3M473.09 196.62h3M474.59 195.12v3M473.09 225.49h3M474.59 223.99v3M473.09 254.36h3M474.59 252.86v3M473.09 283.23h3M474.59 281.73v3M473.09 312.10h3M474.59 310.60v3M473.09 340.97h3M474.59 339.47v3M473.09 369.84h3M474.59 368.34v3M473.09 398.71h3M474.59 397.21v3M473.09 427.58h3M474.59 426.08v3M473.09 456.45h3M474.59 454.95v3M473.09 485.32h3M474.59 483.82v3M473.09 514.19h3M474.59 512.69v3M473.09 543.06h3M474.59 541.56v3M473.09 571.93h3M474.59 570.43v3M473.09 600.80h3M474.59 599.30v3M473.09 629.67h3M474.59 628.17v3M501.96 23.40h3M503.46 21.90v3M501.96 52.27h3M503.46 50.77v3M501.96 81.14h3M503.46 79.64v3M501.96 110.01h3M503.46 108.51v3M501.96 138.88h3M503.46 137.38v3M501.96 167.75h3M503.46 166.25v3M501.96 196.62h3M503.46 195.12v3M501.96 225.49h3M503.46 223.99v3M501.96 254.36h3M503.46 252.86v3M501.96 283.23h3M503.46 281.73v3M501.96 312.10h3M503.46 310.60v3M501.96 340.97h3M503.46 339.47v3M501.96 369.84h3M503.46 368.34v3M501.96 398.71h3M503.46 397.21v3M501.96 427.58h3M503.46 426.08v3M501.96 456.45h3M503.46 454.95v3M501.96 485.32h3M503.46 483.82v3M501.96 514.19h3M503.46 512.69v3M501.96 543.06h3M503.46 541.56v3M501.96 571.93h3M503.46 570.43v3M501.96 600.80h3M503.46 599.30v3M501.96 629.67h3M503.46 628.17v3M530.83 23.40h3M532.33 21.90v3M530.83 52.27h3M532.33 50.77v3M530.83 81.14h3M532.33 79.64v3M530.83 110.01h3M532.33 108.51v3M530.83 138.88h3M532.33 137.38v3M530.83 167.75h3M532.33 166.25v3M530.83 196.62h3M532.33 195.12v3M530.83 225.49h3M532.33 223.99v3M530.83 254.36h3M532.33 252.86v3M530.83 283.23h3M532.33 281.73v3M530.83 312.10h3M532.33 310.60v3M530.83 340.97h3M532.33 339.47v3M530.83 369.84h3M532.33 368.34v3M530.83 398.71h3M532.33 397.21v3M530.83 427.58h3M532.33 426.08v3M530.83 456.45h3M532.33 454.95v3M530.83 485.32h3M532.33 483.82v3M530.83 514.19h3M532.33 512.69v3M530.83 543.06h3M532.33 541.56v3M530.83 571.93h3M532.33 570.43v3M530.83 600.80h3M532.33 599.30v3M530.83 629.67h3M532.33 628.17v3M559.70 23.40h3M561.20 21.90v3M559.70 52.27h3M561.20 50.77v3M559.70 81.14h3M561.20 79.64v3M559.70 110.01h3M561.20 108.51v3M559.70 138.88h3M561.20 137.38v3M559.70 167.75h3M561.20 166.25v3M559.70 196.62h3M561.20 195.12v3M559.70 225.49h3M561.20 223.99v3M559.70 254.36h3M561.20 252.86v3M559.70 283.23h3M561.20 281.73v3M559.70 312.10h3M561.20 310.60v3M559.70 340.97h3M561.20 339.47v3M559.70 369.84h3M561.20 368.34v3M559.70 398.71h3M561.20 397.21v3M559.70 427.58h3M561.20 426.08v3M559.70 456.45h3M561.20 454.95v3M559.70 485.32h3M561.20 483.82v3M559.70 514.19h3M561.20 512.69v3M559.70 543.06h3M561.20 541.56v3M559.70 571.93h3M561.20 570.43v3M559.70 600.80h3M561.20 599.30v3M559.70 629.67h3M561.20 628.17v3M588.57 23.40h3M590.07 21.90v3M588.57 52.27h3M590.07 50.77v3M588.57 81.14h3M590.07 79.64v3M588.57 110.01h3M590.07 108.51v3M588.57 138.88h3M590.07 137.38v3M588.57 167.75h3M590.07 166.25v3M588.57 196.62h3M590.07 195.12v3M588.57 225.49h3M590.07 223.99v3M588.57 254.36h3M590.07 252.86v3M588.57 283.23h3M590.07 281.73v3M588.57 312.10h3M590.07 310.60v3M588.57 340.97h3M590.07 339.47v3M588.57 369.84h3M590.07 368.34v3M588.57 398.71h3M590.07 397.21v3M588.57 427.58h3M590.07 426.08v3M588.57 456.45h3M590.07 454.95v3M588.57 485.32h3M590.07 483.82v3M588.57 514.19h3M590.07 512.69v3M588.57 543.06h3M590.07 541.56v3M588.57 571.93h3M590.07 570.43v3M588.57 600.80h3M590.07 599.30v3M588.57 629.67h3M590.07 628.17v3M617.44 23.40h3M618.94 21.90v3M617.44 52.27h3M618.94 50.77v3M617.44 81.14h3M618.94 79.64v3M617.44 110.01h3M618.94 108.51v3M617.44 138.88h3M618.94 137.38v3M617.44 167.75h3M618.94 166.25v3M617.44 196.62h3M618.94 195.12v3M617.44 225.49h3M618.94 223.99v3M617.44 254.36h3M618.94 252.86v3M617.44 283.23h3M618.94 281.73v3M617.44 312.10h3M618.94 310.60v3M617.44 340.97h3M618.94 339.47v3M617.44 369.84h3M618.94 368.34v3M617.44 398.71h3M618.94 397.21v3M617.44 427.58h3M618.94 426.08v3M617.44 456.45h3M618.94 454.95v3M617.44 485.32h3M618.94 483.82v3M617.44 514.19h3M618.94 512.69v3M617.44 543.06h3M618.94 541.56v3M617.44 571.93h3M618.94 570.43v3M617.44 600.80h3M618.94 599.30v3M617.44 629.67h3M618.94 628.17v3M646.31 23.40h3M647.81 21.90v3M646.31 52.27h3M647.81 50.77v3M646.31 81.14h3M647.81 79.64v3M646.31 110.01h3M647.81 108.51v3M646.31 138.88h3M647.81 137.38v3M646.31 167.75h3M647.81 166.25v3M646.31 196.62h3M647.81 195.12v3M646.31 225.49h3M647.81 223.99v3M646.31 254.36h3M647.81 252.86v3M646.31 283.23h3M647.81 281.73v3M646.31 312.10h3M647.81 310.60v3M646.31 340.97h3M647.81 339.47v3M646.31 369.84h3M647.81 368.34v3M646.31 398.71h3M647.81 397.21v3M646.31 427.58h3M647.81 426.08v3M646.31 456.45h3M647.81 454.95v3M646.31 485.32h3M647.81 483.82v3M646.31 514.19h3M647.81 512.69v3M646.31 543.06h3M647.81 541.56v3M646.31 571.93h3M647.81 570.43v3M646.31 600.80h3M647.81 599.30v3M646.31 629.67h3M647.81 628.17v3M675.18 23.40h3M676.68 21.90v3M675.18 52.27h3M676.68 50.77v3M675.18 81.14h3M676.68 79.64v3M675.18 110.01h3M676.68 108.51v3M675.18 138.88h3M676.68 137.38v3M675.18 167.75h3M676.68 166.25v3M675.18 196.62h3M676.68 195.12v3M675.18 225.49h3M676.68 223.99v3M675.18 254.36h3M676.68 252.86v3M675.18 283.23h3M676.68 281.73v3M675.18 312.10h3M676.68 310.60v3M675.18 340.97h3M676.68 339.47v3M675.18 369.84h3M676.68 368.34v3M675.18 398.71h3M676.68 397.21v3M675.18 427.58h3M676.68 426.08v3M675.18 456.45h3M676.68 454.95v3M675.18 485.32h3M676.68 483.82v3M675.18 514.19h3M676.68 512.69v3M675.18 543.06h3M676.68 541.56v3M675.18 571.93h3M676.68 570.43v3M675.18 600.80h3M676.68 599.30v3M675.18 629.67h3M676.68 628.17v3M704.05 23.40h3M705.55 21.90v3M704.05 52.27h3M705.55 50.77v3M704.05 81.14h3M705.55 79.64v3M704.05 110.01h3M705.55 108.51v3M704.05 138.88h3M705.55 137.38v3M704.05 167.75h3M705.55 166.25v3M704.05 196.62h3M705.55 195.12v3M704.05 225.49h3M705.55 223.99v3M704.05 254.36h3M705.55 252.86v3M704.05 283.23h3M705.55 281.73v3M704.05 312.10h3M705.55 310.60v3M704.05 340.97h3M705.55 339.47v3M704.05 369.84h3M705.55 368.34v3M704.05 398.71h3M705.55 397.21v3M704.05 427.58h3M705.55 426.08v3M704.05 456.45h3M705.55 454.95v3M704.05 485.32h3M705.55 483.82v3M704.05 514.19h3M705.55 512.69v3M704.05 543.06h3M705.55 541.56v3M704.05 571.93h3M705.55 570.43v3M704.05 600.80h3M705.55 599.30v3M704.05 629.67h3M705.55 628.17v3M732.92 23.40h3M734.42 21.90v3M732.92 52.27h3M734.42 50.77v3M732.92 81.14h3M734.42 79.64v3M732.92 110.01h3M734.42 108.51v3M732.92 138.88h3M734.42 137.38v3M732.92 167.75h3M734.42 166.25v3M732.92 196.62h3M734.42 195.12v3M732.92 225.49h3M734.42 223.99v3M732.92 254.36h3M734.42 252.86v3M732.92 283.23h3M734.42 281.73v3M732.92 312.10h3M734.42 310.60v3M732.92 340.97h3M734.42 339.47v3M732.92 369.84h3M734.42 368.34v3M732.92 398.71h3M734.42 397.21v3M732.92 427.58h3M734.42 426.08v3M732.92 456.45h3M734.42 454.95v3M732.92 485.32h3M734.42 483.82v3M732.92 514.19h3M734.42 512.69v3M732.92 543.06h3M734.42 541.56v3M732.92 571.93h3M734.42 570.43v3M732.92 600.80h3M734.42 599.30v3M732.92 629.67h3M734.42 628.17v3M761.79 23.40h3M763.29 21.90v3M761.79 52.27h3M763.29 50.77v3M761.79 81.14h3M763.29 79.64v3M761.79 110.01h3M763.29 108.51v3M761.79 138.88h3M763.29 137.38v3M761.79 167.75h3M763.29 166.25v3M761.79 196.62h3M763.29 195.12v3M761.79 225.49h3M763.29 223.99v3M761.79 254.36h3M763.29 252.86v3M761.79 283.23h3M763.29 281.73v3M761.79 312.10h3M763.29 310.60v3M761.79 340.97h3M763.29 339.47v3M761.79 369.84h3M763.29 368.34v3M761.79 398.71h3M763.29 397.21v3M761.79 427.58h3M763.29 426.08v3M761.79 456.45h3M763.29 454.95v3M761.79 485.32h3M763.29 483.82v3M761.79 514.19h3M763.29 512.69v3M761.79 543.06h3M763.29 541.56v3M761.79 571.93h3M763.29 570.43v3M761.79 600.80h3M763.29 599.30v3M761.79 629.67h3M763.29 628.17v3M790.66 23.40h3M792.16 21.90v3M790.66 52.27h3M792.16 50.77v3M790.66 81.14h3M792.16 79.64v3M790.66 110.01h3M792.16 108.51v3M790.66 138.88h3M792.16 137.38v3M790.66 167.75h3M792.16 166.25v3M790.66 196.62h3M792.16 195.12v3M790.66 225.49h3M792.16 223.99v3M790.66 254.36h3M792.16 252.86v3M790.66 283.23h3M792.16 281.73v3M790.66 312.10h3M792.16 310.60v3M790.66 340.97h3M792.16 339.47v3M790.66 369.84h3M792.16 368.34v3M790.66 398.71h3M792.16 397.21v3M790.66 427.58h3M792.16 426.08v3M790.66 456.45h3M792.16 454.95v3M790.66 485.32h3M792.16 483.82v3M790.66 514.19h3M792.16 512.69v3M790.66 543.06h3M792.16 541.56v3M790.66 571.93h3M792.16 570.43v3M790.66 600.80h3M792.16 599.30v3M790.66 629.67h3M792.16 628.17v3M819.53 23.40h3M821.03 21.90v3M819.53 52.27h3M821.03 50.77v3M819.53 81.14h3M821.03 79.64v3M819.53 110.01h3M821.03 108.51v3M819.53 138.88h3M821.03 137.38v3M819.53 167.75h3M821.03 166.25v3M819.53 196.62h3M821.03 195.12v3M819.53 225.49h3M821.03 223.99v3M819.53 254.36h3M821.03 252.86v3M819.53 283.23h3M821.03 281.73v3M819.53 312.10h3M821.03 310.60v3M819.53 340.97h3M821.03 339.47v3M819.53 369.84h3M821.03 368.34v3M819.53 398.71h3M821.03 397.21v3M819.53 427.58h3M821.03 426.08v3M819.53 456.45h3M821.03 454.95v3M819.53 485.32h3M821.03 483.82v3M819.53 514.19h3M821.03 512.69v3M819.53 543.06h3M821.03 541.56v3M819.53 571.93h3M821.03 570.43v3M819.53 600.80h3M821.03 599.30v3M819.53 629.67h3M821.03 628.17v3M848.40 23.40h3M849.90 21.90v3M848.40 52.27h3M849.90 50.77v3M848.40 81.14h3M849.90 79.64v3M848.40 110.01h3M849.90 108.51v3M848.40 138.88h3M849.90 137.38v3M848.40 167.75h3M849.90 166.25v3M848.40 196.62h3M849.90 195.12v3M848.40 225.49h3M849.90 223.99v3M848.40 254.36h3M849.90 252.86v3M848.40 283.23h3M849.90 281.73v3M848.40 312.10h3M849.90 310.60v3M848.40 340.97h3M849.90 339.47v3M848.40 369.84h3M849.90 368.34v3M848.40 398.71h3M849.90 397.21v3M848.40 427.58h3M849.90 426.08v3M848.40 456.45h3M849.90 454.95v3M848.40 485.32h3M849.90 483.82v3M848.40 514.19h3M849.90 512.69v3M848.40 543.06h3M849.90 541.56v3M848.40 571.93h3M849.90 570.43v3M848.40 600.80h3M849.90 599.30v3M848.40 629.67h3M849.90 628.17v3M877.27 23.40h3M878.77 21.90v3M877.27 52.27h3M878.77 50.77v3M877.27 81.14h3M878.77 79.64v3M877.27 110.01h3M878.77 108.51v3M877.27 138.88h3M878.77 137.38v3M877.27 167.75h3M878.77 166.25v3M877.27 196.62h3M878.77 195.12v3M877.27 225.49h3M878.77 223.99v3M877.27 254.36h3M878.77 252.86v3M877.27 283.23h3M878.77 281.73v3M877.27 312.10h3M878.77 310.60v3M877.27 340.97h3M878.77 339.47v3M877.27 369.84h3M878.77 368.34v3M877.27 398.71h3M878.77 397.21v3M877.27 427.58h3M878.77 426.08v3M877.27 456.45h3M878.77 454.95v3M877.27 485.32h3M878.77 483.82v3M877.27 514.19h3M878.77 512.69v3M877.27 543.06h3M878.77 541.56v3M877.27 571.93h3M878.77 570.43v3M877.27 600.80h3M878.77 599.30v3M877.27 629.67h3M878.77 628.17v3M906.14 23.40h3M907.64 21.90v3M906.14 52.27h3M907.64 50.77v3M906.14 81.14h3M907.64 79.64v3M906.14 110.01h3M907.64 108.51v3M906.14 138.88h3M907.64 137.38v3M906.14 167.75h3M907.64 166.25v3M906.14 196.62h3M907.64 195.12v3M906.14 225.49h3M907.64 223.99v3M906.14 254.36h3M907.64 252.86v3M906.14 283.23h3M907.64 281.73v3M906.14 312.10h3M907.64 310.60v3M906.14 340.97h3M907.64 339.47v3M906.14 369.84h3M907.64 368.34v3M906.14 398.71h3M907.64 397.21v3M906.14 427.58h3M907.64 426.08v3M906.14 456.45h3M907.64 454.95v3M906.14 485.32h3M907.64 483.82v3M906.14 514.19h3M907.64 512.69v3M906.14 543.06h3M907.64 541.56v3M906.14 571.93h3M907.64 570.43v3M906.14 600.80h3M907.64 599.30v3M906.14 629.67h3M907.64 628.17v3M935.01 23.40h3M936.51 21.90v3M935.01 52.27h3M936.51 50.77v3M935.01 81.14h3M936.51 79.64v3M935.01 110.01h3M936.51 108.51v3M935.01 138.88h3M936.51 137.38v3M935.01 167.75h3M936.51 166.25v3M935.01 196.62h3M936.51 195.12v3M935.01 225.49h3M936.51 223.99v3M935.01 254.36h3M936.51 252.86v3M935.01 283.23h3M936.51 281.73v3M935.01 312.10h3M936.51 310.60v3M935.01 340.97h3M936.51 339.47v3M935.01 369.84h3M936.51 368.34v3M935.01 398.71h3M936.51 397.21v3M935.01 427.58h3M936.51 426.08v3M935.01 456.45h3M936.51 454.95v3M935.01 485.32h3M936.51 483.82v3M935.01 514.19h3M936.51 512.69v3M935.01 543.06h3M936.51 541.56v3M935.01 571.93h3M936.51 570.43v3M935.01 600.80h3M936.51 599.30v3M935.01 629.67h3M936.51 628.17v3M963.88 23.40h3M965.38 21.90v3M963.88 52.27h3M965.38 50.77v3M963.88 81.14h3M965.38 79.64v3M963.88 110.01h3M965.38 108.51v3M963.88 138.88h3M965.38 137.38v3M963.88 167.75h3M965.38 166.25v3M963.88 196.62h3M965.38 195.12v3M963.88 225.49h3M965.38 223.99v3M963.88 254.36h3M965.38 252.86v3M963.88 283.23h3M965.38 281.73v3M963.88 312.10h3M965.38 310.60v3M963.88 340.97h3M965.38 339.47v3M963.88 369.84h3M965.38 368.34v3M963.88 398.71h3M965.38 397.21v3M963.88 427.58h3M965.38 426.08v3M963.88 456.45h3M965.38 454.95v3M963.88 485.32h3M965.38 483.82v3M963.88 514.19h3M965.38 512.69v3M963.88 543.06h3M965.38 541.56v3M963.88 571.93h3M965.38 570.43v3M963.88 600.80h3M965.38 599.30v3M963.88 629.67h3M965.38 628.17v3M992.75 23.40h3M994.25 21.90v3M992.75 52.27h3M994.25 50.77v3M992.75 81.14h3M994.25 79.64v3M992.75 110.01h3M994.25 108.51v3M992.75 138.88h3M994.25 137.38v3M992.75 167.75h3M994.25 166.25v3M992.75 196.62h3M994.25 195.12v3M992.75 225.49h3M994.25 223.99v3M992.75 254.36h3M994.25 252.86v3M992.75 283.23h3M994.25 281.73v3M992.75 312.10h3M994.25 310.60v3M992.75 340.97h3M994.25 339.47v3M992.75 369.84h3M994.25 368.34v3M992.75 398.71h3M994.25 397.21v3M992.75 427.58h3M994.25 426.08v3M992.75 456.45h3M994.25 454.95v3M992.75 485.32h3M994.25 483.82v3M992.75 514.19h3M994.25 512.69v3M992.75 543.06h3M994.25 541.56v3M992.75 571.93h3M994.25 570.43v3M992.75 600.80h3M994.25 599.30v3M992.75 629.67h3M994.25 628.17v3M1021.62 23.40h3M1023.12 21.90v3M1021.62 52.27h3M1023.12 50.77v3M1021.62 81.14h3M1023.12 79.64v3M1021.62 110.01h3M1023.12 108.51v3M1021.62 138.88h3M1023.12 137.38v3M1021.62 167.75h3M1023.12 166.25v3M1021.62 196.62h3M1023.12 195.12v3M1021.62 225.49h3M1023.12 223.99v3M1021.62 254.36h3M1023.12 252.86v3M1021.62 283.23h3M1023.12 281.73v3M1021.62 312.10h3M1023.12 310.60v3M1021.62 340.97h3M1023.12 339.47v3M1021.62 369.84h3M1023.12 368.34v3M1021.62 398.71h3M1023.12 397.21v3M1021.62 427.58h3M1023.12 426.08v3M1021.62 456.45h3M1023.12 454.95v3M1021.62 485.32h3M1023.12 483.82v3M1021.62 514.19h3M1023.12 512.69v3M1021.62 543.06h3M1023.12 541.56v3M1021.62 571.93h3M1023.12 570.43v3M1021.62 600.80h3M1023.12 599.30v3M1021.62 629.67h3M1023.12 628.17v3M1050.49 23.40h3M1051.99 21.90v3M1050.49 52.27h3M1051.99 50.77v3M1050.49 81.14h3M1051.99 79.64v3M1050.49 110.01h3M1051.99 108.51v3M1050.49 138.88h3M1051.99 137.38v3M1050.49 167.75h3M1051.99 166.25v3M1050.49 196.62h3M1051.99 195.12v3M1050.49 225.49h3M1051.99 223.99v3M1050.49 254.36h3M1051.99 252.86v3M1050.49 283.23h3M1051.99 281.73v3M1050.49 312.10h3M1051.99 310.60v3M1050.49 340.97h3M1051.99 339.47v3M1050.49 369.84h3M1051.99 368.34v3M1050.49 398.71h3M1051.99 397.21v3M1050.49 427.58h3M1051.99 426.08v3M1050.49 456.45h3M1051.99 454.95v3M1050.49 485.32h3M1051.99 483.82v3M1050.49 514.19h3M1051.99 512.69v3M1050.49 543.06h3M1051.99 541.56v3M1050.49 571.93h3M1051.99 570.43v3M1050.49 600.80h3M1051.99 599.30v3M1050.49 629.67h3M1051.99 628.17v3M1079.36 23.40h3M1080.86 21.90v3M1079.36 52.27h3M1080.86 50.77v3M1079.36 81.14h3M1080.86 79.64v3M1079.36 110.01h3M1080.86 108.51v3M1079.36 138.88h3M1080.86 137.38v3M1079.36 167.75h3M1080.86 166.25v3M1079.36 196.62h3M1080.86 195.12v3M1079.36 225.49h3M1080.86 223.99v3M1079.36 254.36h3M1080.86 252.86v3M1079.36 283.23h3M1080.86 281.73v3M1079.36 312.10h3M1080.86 310.60v3M1079.36 340.97h3M1080.86 339.47v3M1079.36 369.84h3M1080.86 368.34v3M1079.36 398.71h3M1080.86 397.21v3M1079.36 427.58h3M1080.86 426.08v3M1079.36 456.45h3M1080.86 454.95v3M1079.36 485.32h3M1080.86 483.82v3M1079.36 514.19h3M1080.86 512.69v3M1079.36 543.06h3M1080.86 541.56v3M1079.36 571.93h3M1080.86 570.43v3M1079.36 600.80h3M1080.86 599.30v3M1079.36 629.67h3M1080.86 628.17v3M1108.23 23.40h3M1109.73 21.90v3M1108.23 52.27h3M1109.73 50.77v3M1108.23 81.14h3M1109.73 79.64v3M1108.23 110.01h3M1109.73 108.51v3M1108.23 138.88h3M1109.73 137.38v3M1108.23 167.75h3M1109.73 166.25v3M1108.23 196.62h3M1109.73 195.12v3M1108.23 225.49h3M1109.73 223.99v3M1108.23 254.36h3M1109.73 252.86v3M1108.23 283.23h3M1109.73 281.73v3M1108.23 312.10h3M1109.73 310.60v3M1108.23 340.97h3M1109.73 339.47v3M1108.23 369.84h3M1109.73 368.34v3M1108.23 398.71h3M1109.73 397.21v3M1108.23 427.58h3M1109.73 426.08v3M1108.23 456.45h3M1109.73 454.95v3M1108.23 485.32h3M1109.73 483.82v3M1108.23 514.19h3M1109.73 512.69v3M1108.23 543.06h3M1109.73 541.56v3M1108.23 571.93h3M1109.73 570.43v3M1108.23 600.80h3M1109.73 599.30v3M1108.23 629.67h3M1109.73 628.17v3M1137.10 23.40h3M1138.60 21.90v3M1137.10 52.27h3M1138.60 50.77v3M1137.10 81.14h3M1138.60 79.64v3M1137.10 110.01h3M1138.60 108.51v3M1137.10 138.88h3M1138.60 137.38v3M1137.10 167.75h3M1138.60 166.25v3M1137.10 196.62h3M1138.60 195.12v3M1137.10 225.49h3M1138.60 223.99v3M1137.10 254.36h3M1138.60 252.86v3M1137.10 283.23h3M1138.60 281.73v3M1137.10 312.10h3M1138.60 310.60v3M1137.10 340.97h3M1138.60 339.47v3M1137.10 369.84h3M1138.60 368.34v3M1137.10 398.71h3M1138.60 397.21v3M1137.10 427.58h3M1138.60 426.08v3M1137.10 456.45h3M1138.60 454.95v3M1137.10 485.32h3M1138.60 483.82v3M1137.10 514.19h3M1138.60 512.69v3M1137.10 543.06h3M1138.60 541.56v3M1137.10 571.93h3M1138.60 570.43v3M1137.10 600.80h3M1138.60 599.30v3M1137.10 629.67h3M1138.60 628.17v3M1165.97 23.40h3M1167.47 21.90v3M1165.97 52.27h3M1167.47 50.77v3M1165.97 81.14h3M1167.47 79.64v3M1165.97 110.01h3M1167.47 108.51v3M1165.97 138.88h3M1167.47 137.38v3M1165.97 167.75h3M1167.47 166.25v3M1165.97 196.62h3M1167.47 195.12v3M1165.97 225.49h3M1167.47 223.99v3M1165.97 254.36h3M1167.47 252.86v3M1165.97 283.23h3M1167.47 281.73v3M1165.97 312.10h3M1167.47 310.60v3M1165.97 340.97h3M1167.47 339.47v3M1165.97 369.84h3M1167.47 368.34v3M1165.97 398.71h3M1167.47 397.21v3M1165.97 427.58h3M1167.47 426.08v3M1165.97 456.45h3M1167.47 454.95v3M1165.97 485.32h3M1167.47 483.82v3M1165.97 514.19h3M1167.47 512.69v3M1165.97 543.06h3M1167.47 541.56v3M1165.97 571.93h3M1167.47 570.43v3M1165.97 600.80h3M1167.47 599.30v3M1165.97 629.67h3M1167.47 628.17v3M1194.84 23.40h3M1196.34 21.90v3M1194.84 52.27h3M1196.34 50.77v3M1194.84 81.14h3M1196.34 79.64v3M1194.84 110.01h3M1196.34 108.51v3M1194.84 138.88h3M1196.34 137.38v3M1194.84 167.75h3M1196.34 166.25v3M1194.84 196.62h3M1196.34 195.12v3M1194.84 225.49h3M1196.34 223.99v3M1194.84 254.36h3M1196.34 252.86v3M1194.84 283.23h3M1196.34 281.73v3M1194.84 312.10h3M1196.34 310.60v3M1194.84 340.97h3M1196.34 339.47v3M1194.84 369.84h3M1196.34 368.34v3M1194.84 398.71h3M1196.34 397.21v3M1194.84 427.58h3M1196.34 426.08v3M1194.84 456.45h3M1196.34 454.95v3M1194.84 485.32h3M1196.34 483.82v3M1194.84 514.19h3M1196.34 512.69v3M1194.84 543.06h3M1196.34 541.56v3M1194.84 571.93h3M1196.34 570.43v3M1194.84 600.80h3M1196.34 599.30v3M1194.84 629.67h3M1196.34 628.17v3M1223.71 23.40h3M1225.21 21.90v3M1223.71 52.27h3M1225.21 50.77v3M1223.71 81.14h3M1225.21 79.64v3M1223.71 110.01h3M1225.21 108.51v3M1223.71 138.88h3M1225.21 137.38v3M1223.71 167.75h3M1225.21 166.25v3M1223.71 196.62h3M1225.21 195.12v3M1223.71 225.49h3M1225.21 223.99v3M1223.71 254.36h3M1225.21 252.86v3M1223.71 283.23h3M1225.21 281.73v3M1223.71 312.10h3M1225.21 310.60v3M1223.71 340.97h3M1225.21 339.47v3M1223.71 369.84h3M1225.21 368.34v3M1223.71 398.71h3M1225.21 397.21v3M1223.71 427.58h3M1225.21 426.08v3M1223.71 456.45h3M1225.21 454.95v3M1223.71 485.32h3M1225.21 483.82v3M1223.71 514.19h3M1225.21 512.69v3M1223.71 543.06h3M1225.21 541.56v3M1223.71 571.93h3M1225.21 570.43v3M1223.71 600.80h3M1225.21 599.30v3M1223.71 629.67h3M1225.21 628.17v3M1252.58 23.40h3M1254.08 21.90v3M1252.58 52.27h3M1254.08 50.77v3M1252.58 81.14h3M1254.08 79.64v3M1252.58 110.01h3M1254.08 108.51v3M1252.58 138.88h3M1254.08 137.38v3M1252.58 167.75h3M1254.08 166.25v3M1252.58 196.62h3M1254.08 195.12v3M1252.58 225.49h3M1254.08 223.99v3M1252.58 254.36h3M1254.08 252.86v3M1252.58 283.23h3M1254.08 281.73v3M1252.58 312.10h3M1254.08 310.60v3M1252.58 340.97h3M1254.08 339.47v3M1252.58 369.84h3M1254.08 368.34v3M1252.58 398.71h3M1254.08 397.21v3M1252.58 427.58h3M1254.08 426.08v3M1252.58 456.45h3M1254.08 454.95v3M1252.58 485.32h3M1254.08 483.82v3M1252.58 514.19h3M1254.08 512.69v3M1252.58 543.06h3M1254.08 541.56v3M1252.58 571.93h3M1254.08 570.43v3M1252.58 600.80h3M1254.08 599.30v3M1252.58 629.67h3M1254.08 628.17v3M1281.45 23.40h3M1282.95 21.90v3M1281.45 52.27h3M1282.95 50.77v3M1281.45 81.14h3M1282.95 79.64v3M1281.45 110.01h3M1282.95 108.51v3M1281.45 138.88h3M1282.95 137.38v3M1281.45 167.75h3M1282.95 166.25v3M1281.45 196.62h3M1282.95 195.12v3M1281.45 225.49h3M1282.95 223.99v3M1281.45 254.36h3M1282.95 252.86v3M1281.45 283.23h3M1282.95 281.73v3M1281.45 312.10h3M1282.95 310.60v3M1281.45 340.97h3M1282.95 339.47v3M1281.45 369.84h3M1282.95 368.34v3M1281.45 398.71h3M1282.95 397.21v3M1281.45 427.58h3M1282.95 426.08v3M1281.45 456.45h3M1282.95 454.95v3M1281.45 485.32h3M1282.95 483.82v3M1281.45 514.19h3M1282.95 512.69v3M1281.45 543.06h3M1282.95 541.56v3M1281.45 571.93h3M1282.95 570.43v3M1281.45 600.80h3M1282.95 599.30v3M1281.45 629.67h3M1282.95 628.17v3M1310.32 23.40h3M1311.82 21.90v3M1310.32 52.27h3M1311.82 50.77v3M1310.32 81.14h3M1311.82 79.64v3M1310.32 110.01h3M1311.82 108.51v3M1310.32 138.88h3M1311.82 137.38v3M1310.32 167.75h3M1311.82 166.25v3M1310.32 196.62h3M1311.82 195.12v3M1310.32 225.49h3M1311.82 223.99v3M1310.32 254.36h3M1311.82 252.86v3M1310.32 283.23h3M1311.82 281.73v3M1310.32 312.10h3M1311.82 310.60v3M1310.32 340.97h3M1311.82 339.47v3M1310.32 369.84h3M1311.82 368.34v3M1310.32 398.71h3M1311.82 397.21v3M1310.32 427.58h3M1311.82 426.08v3M1310.32 456.45h3M1311.82 454.95v3M1310.32 485.32h3M1311.82 483.82v3M1310.32 514.19h3M1311.82 512.69v3M1310.32 543.06h3M1311.82 541.56v3M1310.32 571.93h3M1311.82 570.43v3M1310.32 600.80h3M1311.82 599.30v3M1310.32 629.67h3M1311.82 628.17v3M1339.19 23.40h3M1340.69 21.90v3M1339.19 52.27h3M1340.69 50.77v3M1339.19 81.14h3M1340.69 79.64v3M1339.19 110.01h3M1340.69 108.51v3M1339.19 138.88h3M1340.69 137.38v3M1339.19 167.75h3M1340.69 166.25v3M1339.19 196.62h3M1340.69 195.12v3M1339.19 225.49h3M1340.69 223.99v3M1339.19 254.36h3M1340.69 252.86v3M1339.19 283.23h3M1340.69 281.73v3M1339.19 312.10h3M1340.69 310.60v3M1339.19 340.97h3M1340.69 339.47v3M1339.19 369.84h3M1340.69 368.34v3M1339.19 398.71h3M1340.69 397.21v3M1339.19 427.58h3M1340.69 426.08v3M1339.19 456.45h3M1340.69 454.95v3M1339.19 485.32h3M1340.69 483.82v3M1339.19 514.19h3M1340.69 512.69v3M1339.19 543.06h3M1340.69 541.56v3M1339.19 571.93h3M1340.69 570.43v3M1339.19 600.80h3M1340.69 599.30v3M1339.19 629.67h3M1340.69 628.17v3M1368.06 23.40h3M1369.56 21.90v3M1368.06 52.27h3M1369.56 50.77v3M1368.06 81.14h3M1369.56 79.64v3M1368.06 110.01h3M1369.56 108.51v3M1368.06 138.88h3M1369.56 137.38v3M1368.06 167.75h3M1369.56 166.25v3M1368.06 196.62h3M1369.56 195.12v3M1368.06 225.49h3M1369.56 223.99v3M1368.06 254.36h3M1369.56 252.86v3M1368.06 283.23h3M1369.56 281.73v3M1368.06 312.10h3M1369.56 310.60v3M1368.06 340.97h3M1369.56 339.47v3M1368.06 369.84h3M1369.56 368.34v3M1368.06 398.71h3M1369.56 397.21v3M1368.06 427.58h3M1369.56 426.08v3M1368.06 456.45h3M1369.56 454.95v3M1368.06 485.32h3M1369.56 483.82v3M1368.06 514.19h3M1369.56 512.69v3M1368.06 543.06h3M1369.56 541.56v3M1368.06 571.93h3M1369.56 570.43v3M1368.06 600.80h3M1369.56 599.30v3M1368.06 629.67h3M1369.56 628.17v3' stroke='#b0b0b0' stroke-width='1' fill='none'/><path d='M12.17 23.40h1M12.17 52.27h1M12.17 81.14h1M12.17 110.01h1M12.17 138.88h1M12.17 167.75h1M12.17 196.62h1M12.17 225.49h1M12.17 254.36h1M12.17 283.23h1M12.17 312.10h1M12.17 340.97h1M12.17 369.84h1M12.17 398.71h1M12.17 427.58h1M12.17 456.45h1M12.17 485.32h1M12.17 514.19h1M12.17 543.06h1M12.17 571.93h1M12.17 600.80h1M12.17 629.67h1M41.04 23.40h1M41.04 52.27h1M41.04 81.14h1M41.04 110.01h1M41.04 138.88h1M41.04 167.75h1M41.04 196.62h1M41.04 225.49h1M41.04 254.36h1M41.04 283.23h1M41.04 312.10h1M41.04 340.97h1M41.04 369.84h1M41.04 398.71h1M41.04 427.58h1M41.04 456.45h1M41.04 485.32h1M41.04 514.19h1M41.04 543.06h1M41.04 571.93h1M41.04 600.80h1M41.04 629.67h1M69.91 23.40h1M69.91 52.27h1M69.91 81.14h1M69.91 110.01h1M69.91 138.88h1M69.91 167.75h1M69.91 196.62h1M69.91 225.49h1M69.91 254.36h1M69.91 283.23h1M69.91 312.10h1M69.91 340.97h1M69.91 369.84h1M69.91 398.71h1M69.91 427.58h1M69.91 456.45h1M69.91 485.32h1M69.91 514.19h1M69.91 543.06h1M69.91 571.93h1M69.91 600.80h1M69.91 629.67h1M98.78 23.40h1M98.78 52.27h1M98.78 81.14h1M98.78 110.01h1M98.78 138.88h1M98.78 167.75h1M98.78 196.62h1M98.78 225.49h1M98.78 254.36h1M98.78 283.23h1M98.78 312.10h1M98.78 340.97h1M98.78 369.84h1M98.78 398.71h1M98.78 427.58h1M98.78 456.45h1M98.78 485.32h1M98.78 514.19h1M98.78 543.06h1M98.78 571.93h1M98.78 600.80h1M98.78 629.67h1M127.65 23.40h1M127.65 52.27h1M127.65 81.14h1M127.65 110.01h1M127.65 138.88h1M127.65 167.75h1M127.65 196.62h1M127.65 225.49h1M127.65 254.36h1M127.65 283.23h1M127.65 312.10h1M127.65 340.97h1M127.65 369.84h1M127.65 398.71h1M127.65 427.58h1M127.65 456.45h1M127.65 485.32h1M127.65 514.19h1M127.65 543.06h1M127.65 571.93h1M127.65 600.80h1M127.65 629.67h1M156.52 23.40h1M156.52 52.27h1M156.52 81.14h1M156.52 110.01h1M156.52 138.88h1M156.52 167.75h1M156.52 196.62h1M156.52 225.49h1M156.52 254.36h1M156.52 283.23h1M156.52 312.10h1M156.52 340.97h1M156.52 369.84h1M156.52 398.71h1M156.52 427.58h1M156.52 456.45h1M156.52 485.32h1M156.52 514.19h1M156.52 543.06h1M156.52 571.93h1M156.52 600.80h1M156.52 629.67h1M185.39 23.40h1M185.39 52.27h1M185.39 81.14h1M185.39 110.01h1M185.39 138.88h1M185.39 167.75h1M185.39 196.62h1M185.39 225.49h1M185.39 254.36h1M185.39 283.23h1M185.39 312.10h1M185.39 340.97h1M185.39 369.84h1M185.39 398.71h1M185.39 427.58h1M185.39 456.45h1M185.39 485.32h1M185.39 514.19h1M185.39 543.06h1M185.39 571.93h1M185.39 600.80h1M185.39 629.67h1M214.26 23.40h1M214.26 52.27h1M214.26 81.14h1M214.26 110.01h1M214.26 138.88h1M214.26 167.75h1M214.26 196.62h1M214.26 225.49h1M214.26 254.36h1M214.26 283.23h1M214.26 312.10h1M214.26 340.97h1M214.26 369.84h1M214.26 398.71h1M214.26 427.58h1M214.26 456.45h1M214.26 485.32h1M214.26 514.19h1M214.26 543.06h1M214.26 571.93h1M214.26 600.80h1M214.26 629.67h1M243.13 23.40h1M243.13 52.27h1M243.13 81.14h1M243.13 110.01h1M243.13 138.88h1M243.13 167.75h1M243.13 196.62h1M243.13 225.49h1M243.13 254.36h1M243.13 283.23h1M243.13 312.10h1M243.13 340.97h1M243.13 369.84h1M243.13 398.71h1M243.13 427.58h1M243.13 456.45h1M243.13 485.32h1M243.13 514.19h1M243.13 543.06h1M243.13 571.93h1M243.13 600.80h1M243.13 629.67h1M272.00 23.40h1M272.00 52.27h1M272.00 81.14h1M272.00 110.01h1M272.00 138.88h1M272.00 167.75h1M272.00 196.62h1M272.00 225.49h1M272.00 254.36h1M272.00 283.23h1M272.00 312.10h1M272.00 340.97h1M272.00 369.84h1M272.00 398.71h1M272.00 427.58h1M272.00 456.45h1M272.00 485.32h1M272.00 514.19h1M272.00 543.06h1M272.00 571.93h1M272.00 600.80h1M272.00 629.67h1M300.87 23.40h1M300.87 52.27h1M300.87 81.14h1M300.87 110.01h1M300.87 138.88h1M300.87 167.75h1M300.87 196.62h1M300.87 225.49h1M300.87 254.36h1M300.87 283.23h1M300.87 312.10h1M300.87 340.97h1M300.87 369.84h1M300.87 398.71h1M300.87 427.58h1M300.87 456.45h1M300.87 485.32h1M300.87 514.19h1M300.87 543.06h1M300.87 571.93h1M300.87 600.80h1M300.87 629.67h1M329.74 23.40h1M329.74 52.27h1M329.74 81.14h1M329.74 110.01h1M329.74 138.88h1M329.74 167.75h1M329.74 196.62h1M329.74 225.49h1M329.74 254.36h1M329.74 283.23h1M329.74 312.10h1M329.74 340.97h1M329.74 369.84h1M329.74 398.71h1M329.74 427.58h1M329.74 456.45h1M329.74 485.32h1M329.74 514.19h1M329.74 543.06h1M329.74 571.93h1M329.74 600.80h1M329.74 629.67h1M358.61 23.40h1M358.61 52.27h1M358.61 81.14h1M358.61 110.01h1M358.61 138.88h1M358.61 167.75h1M358.61 196.62h1M358.61 225.49h1M358.61 254.36h1M358.61 283.23h1M358.61 312.10h1M358.61 340.97h1M358.61 369.84h1M358.61 398.71h1M358.61 427.58h1M358.61 456.45h1M358.61 485.32h1M358.61 514.19h1M358.61 543.06h1M358.61 571.93h1M358.61 600.80h1M358.61 629.67h1M387.48 23.40h1M387.48 52.27h1M387.48 81.14h1M387.48 110.01h1M387.48 138.88h1M387.48 167.75h1M387.48 196.62h1M387.48 225.49h1M387.48 254.36h1M387.48 283.23h1M387.48 312.10h1M387.48 340.97h1M387.48 369.84h1M387.48 398.71h1M387.48 427.58h1M387.48 456.45h1M387.48 485.32h1M387.48 514.19h1M387.48 543.06h1M387.48 571.93h1M387.48 600.80h1M387.48 629.67h1M416.35 23.40h1M416.35 52.27h1M416.35 81.14h1M416.35 110.01h1M416.35 138.88h1M416.35 167.75h1M416.35 196.62h1M416.35 225.49h1M416.35 254.36h1M416.35 283.23h1M416.35 312.10h1M416.35 340.97h1M416.35 369.84h1M416.35 398.71h1M416.35 427.58h1M416.35 456.45h1M416.35 485.32h1M416.35 514.19h1M416.35 543.06h1M416.35 571.93h1M416.35 600.80h1M416.35 629.67h1M445.22 23.40h1M445.22 52.27h1M445.22 81.14h1M445.22 110.01h1M445.22 138.88h1M445.22 167.75h1M445.22 196.62h1M445.22 225.49h1M445.22 254.36h1M445.22 283.23h1M445.22 312.10h1M445.22 340.97h1M445.22 369.84h1M445.22 398.71h1M445.22 427.58h1M445.22 456.45h1M445.22 485.32h1M445.22 514.19h1M445.22 543.06h1M445.22 571.93h1M445.22 600.80h1M445.22 629.67h1M474.09 23.40h1M474.09 52.27h1M474.09 81.14h1M474.09 110.01h1M474.09 138.88h1M474.09 167.75h1M474.09 196.62h1M474.09 225.49h1M474.09 254.36h1M474.09 283.23h1M474.09 312.10h1M474.09 340.97h1M474.09 369.84h1M474.09 398.71h1M474.09 427.58h1M474.09 456.45h1M474.09 485.32h1M474.09 514.19h1M474.09 543.06h1M474.09 571.93h1M474.09 600.80h1M474.09 629.67h1M502.96 23.40h1M502.96 52.27h1M502.96 81.14h1M502.96 110.01h1M502.96 138.88h1M502.96 167.75h1M502.96 196.62h1M502.96 225.49h1M502.96 254.36h1M502.96 283.23h1M502.96 312.10h1M502.96 340.97h1M502.96 369.84h1M502.96 398.71h1M502.96 427.58h1M502.96 456.45h1M502.96 485.32h1M502.96 514.19h1M502.96 543.06h1M502.96 571.93h1M502.96 600.80h1M502.96 629.67h1M531.83 23.40h1M531.83 52.27h1M531.83 81.14h1M531.83 110.01h1M531.83 138.88h1M531.83 167.75h1M531.83 196.62h1M531.83 225.49h1M531.83 254.36h1M531.83 283.23h1M531.83 312.10h1M531.83 340.97h1M531.83 369.84h1M531.83 398.71h1M531.83 427.58h1M531.83 456.45h1M531.83 485.32h1M531.83 514.19h1M531.83 543.06h1M531.83 571.93h1M531.83 600.80h1M531.83 629.67h1M560.70 23.40h1M560.70 52.27h1M560.70 81.14h1M560.70 110.01h1M560.70 138.88h1M560.70 167.75h1M560.70 196.62h1M560.70 225.49h1M560.70 254.36h1M560.70 283.23h1M560.70 312.10h1M560.70 340.97h1M560.70 369.84h1M560.70 398.71h1M560.70 427.58h1M560.70 456.45h1M560.70 485.32h1M560.70 514.19h1M560.70 543.06h1M560.70 571.93h1M560.70 600.80h1M560.70 629.67h1M589.57 23.40h1M589.57 52.27h1M589.57 81.14h1M589.57 110.01h1M589.57 138.88h1M589.57 167.75h1M589.57 196.62h1M589.57 225.49h1M589.57 254.36h1M589.57 283.23h1M589.57 312.10h1M589.57 340.97h1M589.57 369.84h1M589.57 398.71h1M589.57 427.58h1M589.57 456.45h1M589.57 485.32h1M589.57 514.19h1M589.57 543.06h1M589.57 571.93h1M589.57 600.80h1M589.57 629.67h1M618.44 23.40h1M618.44 52.27h1M618.44 81.14h1M618.44 110.01h1M618.44 138.88h1M618.44 167.75h1M618.44 196.62h1M618.44 225.49h1M618.44 254.36h1M618.44 283.23h1M618.44 312.10h1M618.44 340.97h1M618.44 369.84h1M618.44 398.71h1M618.44 427.58h1M618.44 456.45h1M618.44 485.32h1M618.44 514.19h1M618.44 543.06h1M618.44 571.93h1M618.44 600.80h1M618.44 629.67h1M647.31 23.40h1M647.31 52.27h1M647.31 81.14h1M647.31 110.01h1M647.31 138.88h1M647.31 167.75h1M647.31 196.62h1M647.31 225.49h1M647.31 254.36h1M647.31 283.23h1M647.31 312.10h1M647.31 340.97h1M647.31 369.84h1M647.31 398.71h1M647.31 427.58h1M647.31 456.45h1M647.31 485.32h1M647.31 514.19h1M647.31 543.06h1M647.31 571.93h1M647.31 600.80h1M647.31 629.67h1M676.18 23.40h1M676.18 52.27h1M676.18 81.14h1M676.18 110.01h1M676.18 138.88h1M676.18 167.75h1M676.18 196.62h1M676.18 225.49h1M676.18 254.36h1M676.18 283.23h1M676.18 312.10h1M676.18 340.97h1M676.18 369.84h1M676.18 398.71h1M676.18 427.58h1M676.18 456.45h1M676.18 485.32h1M676.18 514.19h1M676.18 543.06h1M676.18 571.93h1M676.18 600.80h1M676.18 629.67h1M705.05 23.40h1M705.05 52.27h1M705.05 81.14h1M705.05 110.01h1M705.05 138.88h1M705.05 167.75h1M705.05 196.62h1M705.05 225.49h1M705.05 254.36h1M705.05 283.23h1M705.05 312.10h1M705.05 340.97h1M705.05 369.84h1M705.05 398.71h1M705.05 427.58h1M705.05 456.45h1M705.05 485.32h1M705.05 514.19h1M705.05 543.06h1M705.05 571.93h1M705.05 600.80h1M705.05 629.67h1M733.92 23.40h1M733.92 52.27h1M733.92 81.14h1M733.92 110.01h1M733.92 138.88h1M733.92 167.75h1M733.92 196.62h1M733.92 225.49h1M733.92 254.36h1M733.92 283.23h1M733.92 312.10h1M733.92 340.97h1M733.92 369.84h1M733.92 398.71h1M733.92 427.58h1M733.92 456.45h1M733.92 485.32h1M733.92 514.19h1M733.92 543.06h1M733.92 571.93h1M733.92 600.80h1M733.92 629.67h1M762.79 23.40h1M762.79 52.27h1M762.79 81.14h1M762.79 110.01h1M762.79 138.88h1M762.79 167.75h1M762.79 196.62h1M762.79 225.49h1M762.79 254.36h1M762.79 283.23h1M762.79 312.10h1M762.79 340.97h1M762.79 369.84h1M762.79 398.71h1M762.79 427.58h1M762.79 456.45h1M762.79 485.32h1M762.79 514.19h1M762.79 543.06h1M762.79 571.93h1M762.79 600.80h1M762.79 629.67h1M791.66 23.40h1M791.66 52.27h1M791.66 81.14h1M791.66 110.01h1M791.66 138.88h1M791.66 167.75h1M791.66 196.62h1M791.66 225.49h1M791.66 254.36h1M791.66 283.23h1M791.66 312.10h1M791.66 340.97h1M791.66 369.84h1M791.66 398.71h1M791.66 427.58h1M791.66 456.45h1M791.66 485.32h1M791.66 514.19h1M791.66 543.06h1M791.66 571.93h1M791.66 600.80h1M791.66 629.67h1M820.53 23.40h1M820.53 52.27h1M820.53 81.14h1M820.53 110.01h1M820.53 138.88h1M820.53 167.75h1M820.53 196.62h1M820.53 225.49h1M820.53 254.36h1M820.53 283.23h1M820.53 312.10h1M820.53 340.97h1M820.53 369.84h1M820.53 398.71h1M820.53 427.58h1M820.53 456.45h1M820.53 485.32h1M820.53 514.19h1M820.53 543.06h1M820.53 571.93h1M820.53 600.80h1M820.53 629.67h1M849.40 23.40h1M849.40 52.27h1M849.40 81.14h1M849.40 110.01h1M849.40 138.88h1M849.40 167.75h1M849.40 196.62h1M849.40 225.49h1M849.40 254.36h1M849.40 283.23h1M849.40 312.10h1M849.40 340.97h1M849.40 369.84h1M849.40 398.71h1M849.40 427.58h1M849.40 456.45h1M849.40 485.32h1M849.40 514.19h1M849.40 543.06h1M849.40 571.93h1M849.40 600.80h1M849.40 629.67h1M878.27 23.40h1M878.27 52.27h1M878.27 81.14h1M878.27 110.01h1M878.27 138.88h1M878.27 167.75h1M878.27 196.62h1M878.27 225.49h1M878.27 254.36h1M878.27 283.23h1M878.27 312.10h1M878.27 340.97h1M878.27 369.84h1M878.27 398.71h1M878.27 427.58h1M878.27 456.45h1M878.27 485.32h1M878.27 514.19h1M878.27 543.06h1M878.27 571.93h1M878.27 600.80h1M878.27 629.67h1M907.14 23.40h1M907.14 52.27h1M907.14 81.14h1M907.14 110.01h1M907.14 138.88h1M907.14 167.75h1M907.14 196.62h1M907.14 225.49h1M907.14 254.36h1M907.14 283.23h1M907.14 312.10h1M907.14 340.97h1M907.14 369.84h1M907.14 398.71h1M907.14 427.58h1M907.14 456.45h1M907.14 485.32h1M907.14 514.19h1M907.14 543.06h1M907.14 571.93h1M907.14 600.80h1M907.14 629.67h1M936.01 23.40h1M936.01 52.27h1M936.01 81.14h1M936.01 110.01h1M936.01 138.88h1M936.01 167.75h1M936.01 196.62h1M936.01 225.49h1M936.01 254.36h1M936.01 283.23h1M936.01 312.10h1M936.01 340.97h1M936.01 369.84h1M936.01 398.71h1M936.01 427.58h1M936.01 456.45h1M936.01 485.32h1M936.01 514.19h1M936.01 543.06h1M936.01 571.93h1M936.01 600.80h1M936.01 629.67h1M964.88 23.40h1M964.88 52.27h1M964.88 81.14h1M964.88 110.01h1M964.88 138.88h1M964.88 167.75h1M964.88 196.62h1M964.88 225.49h1M964.88 254.36h1M964.88 283.23h1M964.88 312.10h1M964.88 340.97h1M964.88 369.84h1M964.88 398.71h1M964.88 427.58h1M964.88 456.45h1M964.88 485.32h1M964.88 514.19h1M964.88 543.06h1M964.88 571.93h1M964.88 600.80h1M964.88 629.67h1M993.75 23.40h1M993.75 52.27h1M993.75 81.14h1M993.75 110.01h1M993.75 138.88h1M993.75 167.75h1M993.75 196.62h1M993.75 225.49h1M993.75 254.36h1M993.75 283.23h1M993.75 312.10h1M993.75 340.97h1M993.75 369.84h1M993.75 398.71h1M993.75 427.58h1M993.75 456.45h1M993.75 485.32h1M993.75 514.19h1M993.75 543.06h1M993.75 571.93h1M993.75 600.80h1M993.75 629.67h1M1022.62 23.40h1M1022.62 52.27h1M1022.62 81.14h1M1022.62 110.01h1M1022.62 138.88h1M1022.62 167.75h1M1022.62 196.62h1M1022.62 225.49h1M1022.62 254.36h1M1022.62 283.23h1M1022.62 312.10h1M1022.62 340.97h1M1022.62 369.84h1M1022.62 398.71h1M1022.62 427.58h1M1022.62 456.45h1M1022.62 485.32h1M1022.62 514.19h1M1022.62 543.06h1M1022.62 571.93h1M1022.62 600.80h1M1022.62 629.67h1M1051.49 23.40h1M1051.49 52.27h1M1051.49 81.14h1M1051.49 110.01h1M1051.49 138.88h1M1051.49 167.75h1M1051.49 196.62h1M1051.49 225.49h1M1051.49 254.36h1M1051.49 283.23h1M1051.49 312.10h1M1051.49 340.97h1M1051.49 369.84h1M1051.49 398.71h1M1051.49 427.58h1M1051.49 456.45h1M1051.49 485.32h1M1051.49 514.19h1M1051.49 543.06h1M1051.49 571.93h1M1051.49 600.80h1M1051.49 629.67h1M1080.36 23.40h1M1080.36 52.27h1M1080.36 81.14h1M1080.36 110.01h1M1080.36 138.88h1M1080.36 167.75h1M1080.36 196.62h1M1080.36 225.49h1M1080.36 254.36h1M1080.36 283.23h1M1080.36 312.10h1M1080.36 340.97h1M1080.36 369.84h1M1080.36 398.71h1M1080.36 427.58h1M1080.36 456.45h1M1080.36 485.32h1M1080.36 514.19h1M1080.36 543.06h1M1080.36 571.93h1M1080.36 600.80h1M1080.36 629.67h1M1109.23 23.40h1M1109.23 52.27h1M1109.23 81.14h1M1109.23 110.01h1M1109.23 138.88h1M1109.23 167.75h1M1109.23 196.62h1M1109.23 225.49h1M1109.23 254.36h1M1109.23 283.23h1M1109.23 312.10h1M1109.23 340.97h1M1109.23 369.84h1M1109.23 398.71h1M1109.23 427.58h1M1109.23 456.45h1M1109.23 485.32h1M1109.23 514.19h1M1109.23 543.06h1M1109.23 571.93h1M1109.23 600.80h1M1109.23 629.67h1M1138.10 23.40h1M1138.10 52.27h1M1138.10 81.14h1M1138.10 110.01h1M1138.10 138.88h1M1138.10 167.75h1M1138.10 196.62h1M1138.10 225.49h1M1138.10 254.36h1M1138.10 283.23h1M1138.10 312.10h1M1138.10 340.97h1M1138.10 369.84h1M1138.10 398.71h1M1138.10 427.58h1M1138.10 456.45h1M1138.10 485.32h1M1138.10 514.19h1M1138.10 543.06h1M1138.10 571.93h1M1138.10 600.80h1M1138.10 629.67h1M1166.97 23.40h1M1166.97 52.27h1M1166.97 81.14h1M1166.97 110.01h1M1166.97 138.88h1M1166.97 167.75h1M1166.97 196.62h1M1166.97 225.49h1M1166.97 254.36h1M1166.97 283.23h1M1166.97 312.10h1M1166.97 340.97h1M1166.97 369.84h1M1166.97 398.71h1M1166.97 427.58h1M1166.97 456.45h1M1166.97 485.32h1M1166.97 514.19h1M1166.97 543.06h1M1166.97 571.93h1M1166.97 600.80h1M1166.97 629.67h1M1195.84 23.40h1M1195.84 52.27h1M1195.84 81.14h1M1195.84 110.01h1M1195.84 138.88h1M1195.84 167.75h1M1195.84 196.62h1M1195.84 225.49h1M1195.84 254.36h1M1195.84 283.23h1M1195.84 312.10h1M1195.84 340.97h1M1195.84 369.84h1M1195.84 398.71h1M1195.84 427.58h1M1195.84 456.45h1M1195.84 485.32h1M1195.84 514.19h1M1195.84 543.06h1M1195.84 571.93h1M1195.84 600.80h1M1195.84 629.67h1M1224.71 23.40h1M1224.71 52.27h1M1224.71 81.14h1M1224.71 110.01h1M1224.71 138.88h1M1224.71 167.75h1M1224.71 196.62h1M1224.71 225.49h1M1224.71 254.36h1M1224.71 283.23h1M1224.71 312.10h1M1224.71 340.97h1M1224.71 369.84h1M1224.71 398.71h1M1224.71 427.58h1M1224.71 456.45h1M1224.71 485.32h1M1224.71 514.19h1M1224.71 543.06h1M1224.71 571.93h1M1224.71 600.80h1M1224.71 629.67h1M1253.58 23.40h1M1253.58 52.27h1M1253.58 81.14h1M1253.58 110.01h1M1253.58 138.88h1M1253.58 167.75h1M1253.58 196.62h1M1253.58 225.49h1M1253.58 254.36h1M1253.58 283.23h1M1253.58 312.10h1M1253.58 340.97h1M1253.58 369.84h1M1253.58 398.71h1M1253.58 427.58h1M1253.58 456.45h1M1253.58 485.32h1M1253.58 514.19h1M1253.58 543.06h1M1253.58 571.93h1M1253.58 600.80h1M1253.58 629.67h1M1282.45 23.40h1M1282.45 52.27h1M1282.45 81.14h1M1282.45 110.01h1M1282.45 138.88h1M1282.45 167.75h1M1282.45 196.62h1M1282.45 225.49h1M1282.45 254.36h1M1282.45 283.23h1M1282.45 312.10h1M1282.45 340.97h1M1282.45 369.84h1M1282.45 398.71h1M1282.45 427.58h1M1282.45 456.45h1M1282.45 485.32h1M1282.45 514.19h1M1282.45 543.06h1M1282.45 571.93h1M1282.45 600.80h1M1282.45 629.67h1M1311.32 23.40h1M1311.32 52.27h1M1311.32 81.14h1M1311.32 110.01h1M1311.32 138.88h1M1311.32 167.75h1M1311.32 196.62h1M1311.32 225.49h1M1311.32 254.36h1M1311.32 283.23h1M1311.32 312.10h1M1311.32 340.97h1M1311.32 369.84h1M1311.32 398.71h1M1311.32 427.58h1M1311.32 456.45h1M1311.32 485.32h1M1311.32 514.19h1M1311.32 543.06h1M1311.32 571.93h1M1311.32 600.80h1M1311.32 629.67h1M1340.19 23.40h1M1340.19 52.27h1M1340.19 81.14h1M1340.19 110.01h1M1340.19 138.88h1M1340.19 167.75h1M1340.19 196.62h1M1340.19 225.49h1M1340.19 254.36h1M1340.19 283.23h1M1340.19 312.10h1M1340.19 340.97h1M1340.19 369.84h1M1340.19 398.71h1M1340.19 427.58h1M1340.19 456.45h1M1340.19 485.32h1M1340.19 514.19h1M1340.19 543.06h1M1340.19 571.93h1M1340.19 600.80h1M1340.19 629.67h1M1369.06 23.40h1M1369.06 52.27h1M1369.06 81.14h1M1369.06 110.01h1M1369.06 138.88h1M1369.06 167.75h1M1369.06 196.62h1M1369.06 225.49h1M1369.06 254.36h1M1369.06 283.23h1M1369.06 312.10h1M1369.06 340.97h1M1369.06 369.84h1M1369.06 398.71h1M1369.06 427.58h1M1369.06 456.45h1M1369.06 485.32h1M1369.06 514.19h1M1369.06 543.06h1M1369.06 571.93h1M1369.06 600.80h1M1369.06 629.67h1' stroke='#fff' stroke-width='1.15' fill='none'/></svg><div id='mainbot' class='abs'><div class='s1'></div><div class='s2'></div><div class='s3'></div><div class='s4'></div><span class='t' style='left:-0.3px'>ress()</span><span class='t' style='left:1284px'>R: _lxHiMousePopUp()</span></div><div id='win' class='abs'><div id='title'><div id='icon'><b>c</b><i></i></div><span class='tt' style='left:34.9px;transform:scaleX(.93)'>Virtuoso</span><span class='tt' style='left:91.8px;top:8px;font-size:12.6px'>®</span><span class='tt' style='left:106.6px;transform:scaleX(.862)'>6.1.5</span><span class='tt' style='left:141.6px;transform:scaleX(.9)'>-</span><span class='tt' style='left:150.6px;transform:scaleX(.913)'>Log:</span><span class='tt' style='left:183.4px;transform:scaleX(.943)'>/home/staffier/CDS.log@csimcluster.ee.unlv.edu</span><svg class='wb' style='left:740px;top:0' width='166' height='38' viewBox='0 0 166 38'><path d='M13 18.6h12.5' stroke='#000' stroke-width='1.2' fill='none'/><rect x='71.5' y='13.5' width='11' height='11' stroke='#000' stroke-width='1.2' fill='none'/><path d='M130 13l12 12M142 13l-12 12' stroke='#000' stroke-width='1.2' fill='none'/></svg></div><div id='menubar'><span style='left:16.5px'><u>F</u>ile</span><span style='left:57px'><u>T</u>ools</span><span style='left:110px'><u>O</u>ptions</span><span style='left:178.5px'><u>H</u>elp</span></div><div id='logo'>cadence</div><div id='logobar'></div><div id='redline'></div><div id='ta'><pre>executing: saveDerived(via2 ("via2" "net") cell_view)
Extraction started.......Wed Oct 20 06:37:10 2021
           completed ....Wed Oct 20 06:37:10 2021
    CPU TIME = 00:00:00  TOTAL TIME = 00:00:00
*********   Summary of rule violations for cell "ring_oscillator layout"   *********
   Total errors found: 0

saving rep lab6/ring_oscillator/extracted
Getting layout propert bagGetting layout propert bag</pre></div><div id='vsb'><div class='up'><div class='tri-up'></div></div><div class='th'><i></i></div><div class='dn'><div class='tri-dn'></div></div></div><div id='gap'></div><div id='inp'><div class='z'><span>z</span></div></div><div id='inpline'></div><div id='lb'></div><div id='hsb'><div class='l'></div><div class='th'></div><div class='grip'></div><div class='r'><i></i></div></div><div id='spin'><div class='a'></div><div class='b'></div></div><div id='status'><div class='g'></div><span style='left:18px'>mouse L: showClickInfo() _leiLMBPress()</span><span style='left:406px'>M: setExtForm()</span><span style='left:735px'>R: _lxHiMousePopUp()</span></div></div></body></html>
